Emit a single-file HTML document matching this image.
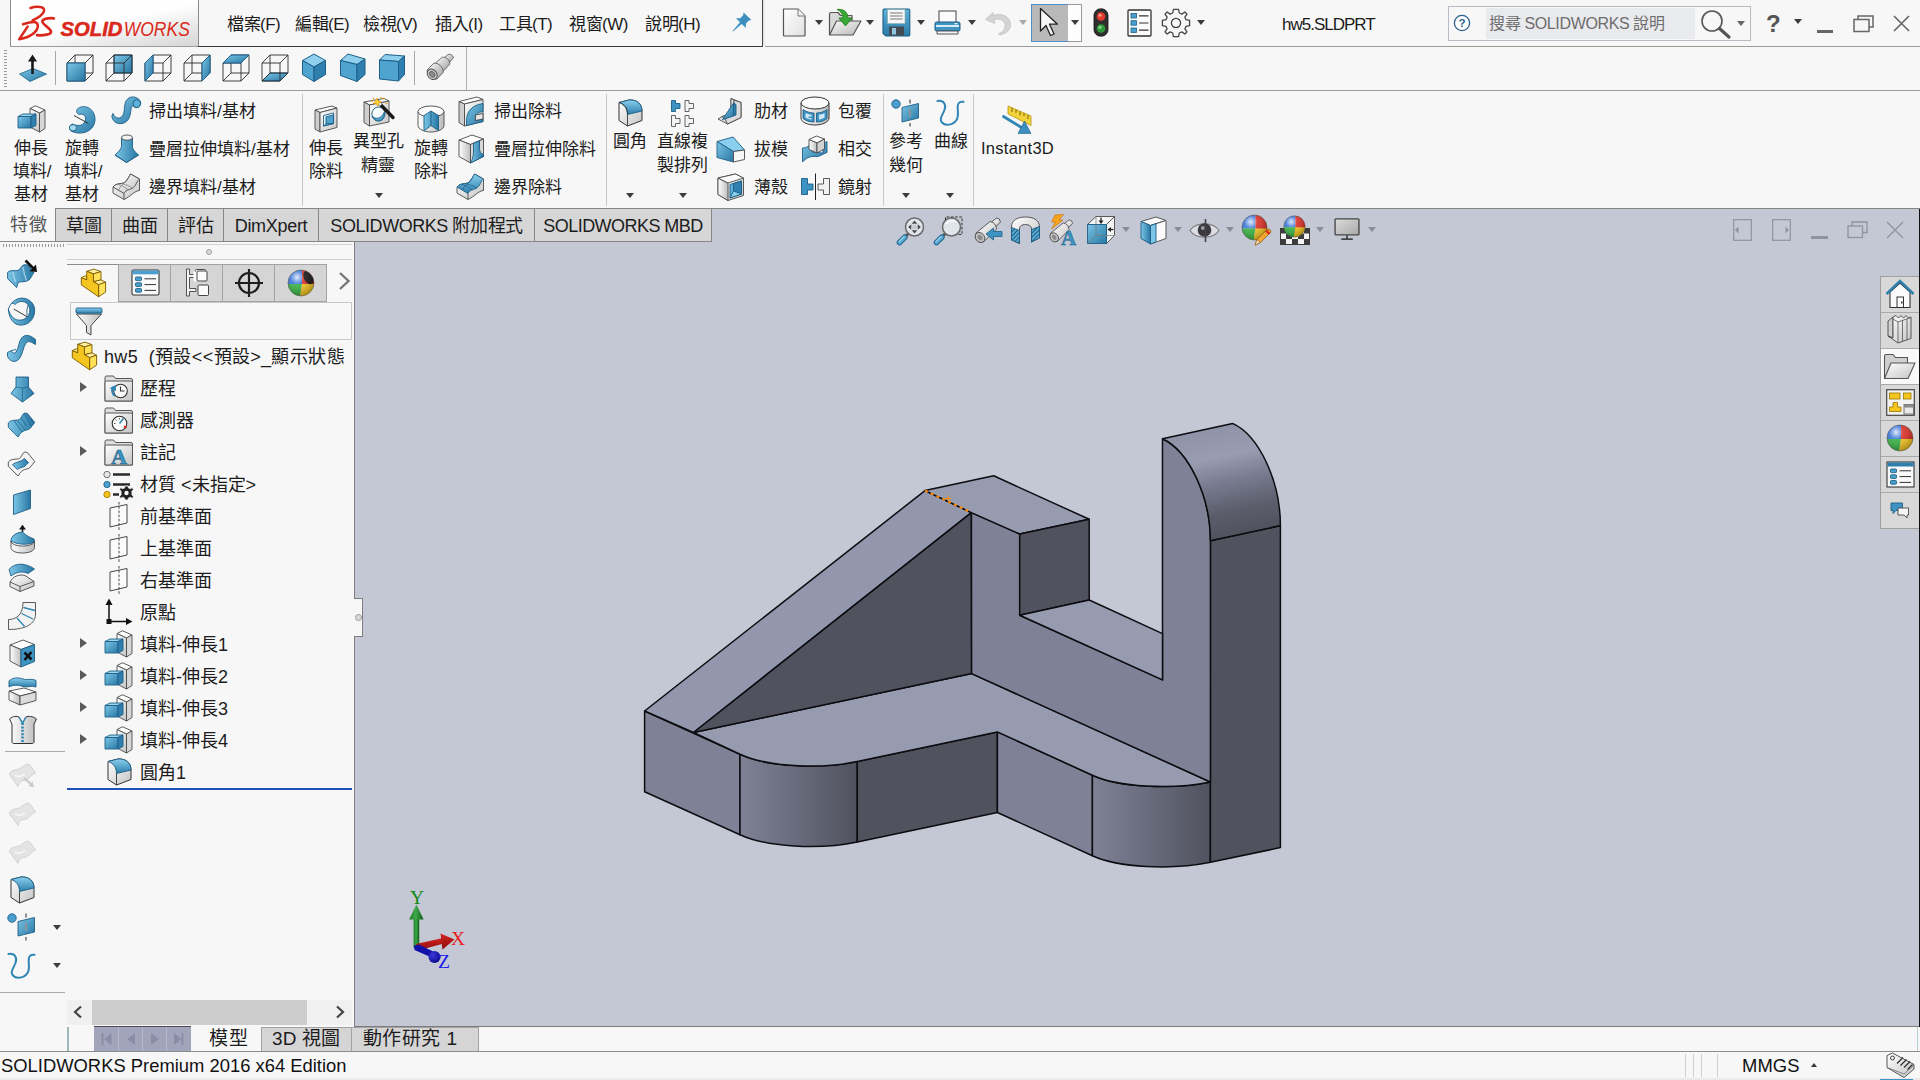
<!DOCTYPE html>
<html lang="zh-TW"><head><meta charset="utf-8"><title>SOLIDWORKS Premium 2016 x64 Edition - [hw5.SLDPRT]</title>
<style>
*{box-sizing:border-box;margin:0;padding:0}
html,body{width:1920px;height:1080px;overflow:hidden;background:#f7f7f7;font-family:"Liberation Sans",sans-serif;color:#1a1a1a}
.a{position:absolute}
.t{position:absolute;white-space:nowrap;font-size:17px;line-height:20px;color:#1c1c1c}
.c{text-align:center}
svg{position:absolute;overflow:visible}
.dd{position:absolute;width:0;height:0;border-left:4px solid transparent;border-right:4px solid transparent;border-top:5px solid #3c3c3c}
.ddg{border-top-color:#8a8d96}
.vsep{position:absolute;width:1px;background:#c9c9c9}
.tab{position:absolute;top:208px;height:34px;background:#d6d6d6;border:1px solid #858585;font-size:18px;line-height:34px;text-align:center;white-space:nowrap;color:#1c1c1c}
.row{position:absolute;left:140px;font-size:18px;line-height:20px;white-space:nowrap;color:#1c1c1c}
.exp{position:absolute;left:80px;width:0;height:0;border-top:5.5px solid transparent;border-bottom:5.5px solid transparent;border-left:7px solid #5a5a5a}
</style></head>
<body>

<!-- ===== Graphics viewport ===== -->
<div class="a" style="left:355px;top:209px;width:1565px;height:818px;background:#c4c8d4"></div>
<div class="a" style="left:354px;top:242px;width:1px;height:785px;background:#7d7d7d"></div>
<div class="a" style="left:355px;top:1026px;width:1565px;height:1px;background:#7c7c7c"></div>
<div class="a" style="left:1919px;top:209px;width:1px;height:818px;background:#101014"></div>
<!-- splitter handle -->
<div class="a" style="left:355px;top:598px;width:8px;height:39px;background:#f7f7f7;border:1px solid #7d7d7d;border-left:none"></div>
<div class="a" style="left:354px;top:599px;width:1px;height:37px;background:#f7f7f7"></div>
<div class="a" style="left:355px;top:614px;width:7px;height:7px;border:1px solid #9a9a9a;border-radius:50%;background:#d9d9d9"></div>

<!-- ===== 3D model ===== -->
<svg style="left:0;top:0" width="1920" height="1080" viewBox="0 0 1920 1080">
<defs><linearGradient id="mf1" gradientUnits="userSpaceOnUse" x1="740" y1="0" x2="857" y2="0"><stop offset="0" stop-color="#7f8296"/><stop offset="0.45" stop-color="#6a6d7e"/><stop offset="1" stop-color="#50525e"/></linearGradient><linearGradient id="mf2" gradientUnits="userSpaceOnUse" x1="1092" y1="0" x2="1210" y2="0"><stop offset="0" stop-color="#7f8296"/><stop offset="0.45" stop-color="#6a6d7e"/><stop offset="1" stop-color="#50525e"/></linearGradient><linearGradient id="mf3" gradientUnits="userSpaceOnUse" x1="1197.5" y1="431" x2="1220.9" y2="538.5"><stop offset="0" stop-color="#8f93a8"/><stop offset="0.27" stop-color="#999db2"/><stop offset="0.52" stop-color="#777a8e"/><stop offset="0.78" stop-color="#5b5d6b"/><stop offset="1" stop-color="#50525e"/></linearGradient></defs>
<g stroke="#0c0c10" stroke-width="1.5" stroke-linejoin="round" stroke-linecap="round">
<polygon points="644.6,711 740,754.3 740,834.8 644.6,791.7" fill="#7f8296"/>
<path d="M 740 754.3 C 766.5 766.5 819.0 769.7 857.3 761.6 L 857.3 842 C 819.0 850.1 766.5 847.0 740 834.8 Z" fill="url(#mf1)"/>
<polygon points="857.3,761.6 997.4,731.9 997.4,812.5 857.3,842" fill="#50525e"/>
<polygon points="997.4,731.9 1092.4,775.2 1092.4,855.7 997.4,812.5" fill="#7f8296"/>
<path d="M 1092.4 775.2 C 1118.2 787.0 1171.1 790.1 1210.4 782 L 1210.4 862.3 C 1171.1 870.4 1118.2 867.5 1092.4 855.7 Z" fill="url(#mf2)"/>
<polygon points="1210.4,540.8 1280.4,525.6 1280.4,847.6 1210.4,862.3" fill="#50525e"/>
<path d="M 693.5 732.5 L 971.6 673.6 L 1210.4 782 C 1171.1 790.1 1118.2 787.0 1092.4 775.2 L 997.4 731.9 L 857.3 761.6 C 819.0 769.7 766.5 766.5 740 754.3 Z" fill="#979bb0"/>
<polygon points="644.6,711 925,490.6 971.4,512.6 693.5,732.5" fill="#9397ad"/>
<polygon points="693.5,732.5 971.4,512.6 971.6,673.6" fill="#50525e"/>
<path d="M 971.4 512.6 L 1019.7 534 L 1019.7 615.2 L 1162.5 679.9 L 1162.5 438.7 C 1189.0 450.9 1210.4 496.6 1210.4 540.8 L 1210.4 782 L 971.6 673.6 Z" fill="#7f8296"/>
<polygon points="925,490.6 993.7,475.8 1089.2,519.3 1019.7,534 971.4,512.6" fill="#979bb0"/>
<polygon points="1019.7,534 1089.2,519.3 1089.2,600 1019.7,615.2" fill="#50525e"/>
<polygon points="1019.7,615.2 1089.2,600 1162.5,633.6 1162.5,679.9" fill="#979bb0"/>
<path d="M 1162.5 438.7 L 1232.6 423.4 C 1259.1 435.6 1280.4 481.4 1280.4 525.6 L 1210.4 540.8 C 1210.4 496.6 1189.0 450.9 1162.5 438.7 Z" fill="url(#mf3)"/>
</g>
<path d="M 925 490.6 L 971.4 512.6" stroke="#ff8a00" stroke-width="2.2" stroke-dasharray="3 3.4"/>
<path d="M 945.3 498.5 h6 M 948.3 495.5 v6" stroke="#ff8a00" stroke-width="1"/>
</svg>

<!-- ===== Title bar ===== -->
<div class="a" style="left:0;top:0;width:1920px;height:47px;background:#f7f7f7"></div>
<div class="a" style="left:10px;top:0;width:189px;height:47px;background:linear-gradient(168deg,#ffffff 0%,#fefefe 50%,#e9e9e9 75%,#d6d6d6 100%);border-left:1px solid #8c8c8c;border-right:1px solid #8c8c8c;border-bottom:1px solid #9c9c9c"></div>
<div class="a" style="left:198px;top:46px;width:565px;height:1px;background:#3a3a3a"></div>
<div class="a" style="left:762px;top:0;width:1px;height:47px;background:#4a4a4a"></div>
<div class="a" style="left:763px;top:0;width:2px;height:46px;background:linear-gradient(90deg,#d9d9d9,#f7f7f7)"></div>
<div class="a" style="left:765px;top:46px;width:1155px;height:1px;background:#9a9a9a"></div>
<!-- DS SOLIDWORKS logo -->
<svg style="left:0;top:0" width="200" height="46" viewBox="0 0 200 46">
  <g fill="none" stroke="#da291c" stroke-linecap="round" stroke-linejoin="round">
    <path d="M30.5 8 C36 6.2 45.5 6 44 11.2 C42.8 15 38 18 32.5 20.5" stroke-width="2.5"/>
    <path d="M23 24.2 C28 22.8 33 21.8 35.3 22.2 C39.2 24 38.6 29 34 33 C30 36.4 24.5 38.4 19.2 39.3 L27.6 26.6" stroke-width="2.5"/>
    <path d="M53.8 18.3 C49 18 44 18.8 42.4 20.8 C40.8 23.4 50 27.8 51 31.4 C51.6 34.6 43.5 35.6 37 35.2" stroke-width="2.7"/>
  </g>
  <text x="60.5" y="36.1" font-family="Liberation Sans, sans-serif" font-size="19.8" font-weight="bold" font-style="italic" fill="#da291c" stroke="#da291c" stroke-width="0.5" textLength="62" lengthAdjust="spacingAndGlyphs">SOLID</text>
  <text x="123.8" y="36.1" font-family="Liberation Sans, sans-serif" font-size="19.8" font-style="italic" fill="#da291c" textLength="66" lengthAdjust="spacingAndGlyphs">WORKS</text>
</svg>
<!-- Menus -->
<div class="t" style="left:227px;top:15px;letter-spacing:-0.5px">檔案(F)</div>
<div class="t" style="left:295px;top:15px;letter-spacing:-0.5px">編輯(E)</div>
<div class="t" style="left:363px;top:15px;letter-spacing:-0.5px">檢視(V)</div>
<div class="t" style="left:435px;top:15px;letter-spacing:-0.5px">插入(I)</div>
<div class="t" style="left:499px;top:15px;letter-spacing:-0.5px">工具(T)</div>
<div class="t" style="left:569px;top:15px;letter-spacing:-0.5px">視窗(W)</div>
<div class="t" style="left:645px;top:15px;letter-spacing:-0.5px">說明(H)</div>
<!-- pin -->
<svg style="left:731px;top:11px" width="22" height="22" viewBox="0 0 22 22">
  <path d="M12.5 1.5 L20.5 9 L17.8 9.6 L14.8 12.8 L15 17 L10.7 13 L2 20.5 L1.5 20 L9 11.3 L5 7.2 L9.4 7.2 L12.2 4.2 Z" fill="#3d8fc0"/>
</svg>
<!-- New -->
<svg style="left:782px;top:8px" width="25" height="29" viewBox="0 0 25 29">
  <defs><linearGradient id="gdoc" x1="0" y1="0" x2="1" y2="1"><stop offset="0" stop-color="#ffffff"/><stop offset="1" stop-color="#e1e1e1"/></linearGradient></defs>
  <path d="M1.5 1 H16 L23 8 V27 Q23 28 22 28 H2.5 Q1.5 28 1.5 27 Z" fill="url(#gdoc)" stroke="#555" stroke-width="1.2" stroke-linejoin="round"/>
  <path d="M16 1 V8 H23" fill="#f4f4f4" stroke="#777" stroke-width="1"/>
</svg>
<div class="dd" style="left:815px;top:20px"></div>
<!-- Open -->
<svg style="left:828px;top:7px" width="36" height="30" viewBox="0 0 36 30">
  <defs><linearGradient id="gfo" x1="0" y1="0" x2="1" y2="1"><stop offset="0" stop-color="#fafafa"/><stop offset="1" stop-color="#b9b9b9"/></linearGradient></defs>
  <path d="M1.5 28 V7 Q1.5 5.5 3 5.5 H10 L12.5 8.5 H24 V14" fill="#d9d9d9" stroke="#555" stroke-width="1.2" stroke-linejoin="round"/>
  <path d="M1.5 28 L8.5 14 H33 L25 28 Z" fill="url(#gfo)" stroke="#555" stroke-width="1.2" stroke-linejoin="round"/>
  <path d="M9 2.5 C15 1.5 20 5 20 11 L24.2 11 L17.5 19 L10.8 11 L14.8 11 C14.8 7 13 4.5 9 2.5 Z" fill="#39a935" stroke="#1f7a1f" stroke-width="0.8" stroke-linejoin="round"/>
</svg>
<div class="dd" style="left:866px;top:20px"></div>
<!-- Save -->
<svg style="left:882px;top:8px" width="29" height="29" viewBox="0 0 29 29">
  <defs><linearGradient id="gsv" x1="0" y1="0" x2="0" y2="1"><stop offset="0" stop-color="#5fb0d8"/><stop offset="1" stop-color="#2a7aa8"/></linearGradient></defs>
  <path d="M2 1 H26.5 Q27.8 1 27.8 2.3 V26.7 Q27.8 28 26.5 28 H4 L1 25.5 V2.3 Q1 1 2 1 Z" fill="url(#gsv)" stroke="#1d5f86" stroke-width="1.1"/>
  <rect x="5.5" y="1.6" width="17.5" height="14" fill="#f6f6f6" stroke="#8aa" stroke-width="0.6"/>
  <path d="M8 5 H20.5 M8 8 H20.5 M8 11 H20.5" stroke="#777" stroke-width="1.1"/>
  <rect x="7" y="18.5" width="15" height="9" fill="#444b52"/>
  <rect x="10" y="20" width="4" height="6.5" fill="#8fc3e0"/>
</svg>
<div class="dd" style="left:917px;top:20px"></div>
<!-- Print -->
<svg style="left:934px;top:10px" width="27" height="26" viewBox="0 0 27 26">
  <rect x="5" y="1" width="17" height="12" fill="#fbfbfb" stroke="#555" stroke-width="1.1"/>
  <rect x="1" y="12" width="25" height="9" rx="1.5" fill="#3f94c4" stroke="#1d5f86" stroke-width="1"/>
  <rect x="2" y="15" width="23" height="2" fill="#d7ecf7"/>
  <rect x="20.5" y="13" width="3" height="1.3" fill="#e8f4fa"/>
  <path d="M3 21 H24 V24 H3 Z" fill="#f4f4f4" stroke="#555" stroke-width="1"/>
</svg>
<div class="dd" style="left:968px;top:20px"></div>
<!-- Undo (disabled) -->
<svg style="left:984px;top:11px" width="28" height="25" viewBox="0 0 28 25">
  <path d="M9 1.5 L1.5 8.5 L11 12.5 L9.8 9 C16 6.5 21 9.5 21 14.5 C21 18.5 18.5 21.5 14.5 22.5 L15.5 24 C22 23 26.5 19 26.5 13.5 C26.5 6 18 1.5 9 4.5 Z" fill="#d4d4d4" stroke="#c0c0c0" stroke-width="0.8" stroke-linejoin="round"/>
</svg>
<div class="dd ddg" style="left:1019px;top:20px;border-top-color:#a9a9a9"></div>
<!-- Select -->
<div class="a" style="left:1031px;top:4px;width:38px;height:38px;background:#b9b9b9;border:1px solid #4d8ed0"></div>
<div class="a" style="left:1068px;top:4px;width:14px;height:38px;background:#fdfdfd;border:1px solid #9a9a9a;border-left:none"></div>
<svg style="left:1039px;top:7px" width="22" height="30" viewBox="0 0 22 30">
  <path d="M1.5 1.5 V24 L7 18.5 L11.5 28.5 L15 27 L10.5 17.2 H18.5 Z" fill="#f7f7f7" stroke="#222" stroke-width="1.3" stroke-linejoin="round"/>
</svg>
<div class="dd" style="left:1071px;top:20px"></div>
<!-- Traffic light -->
<svg style="left:1093px;top:8px" width="16" height="29" viewBox="0 0 16 29">
  <rect x="1" y="0.8" width="14" height="27.4" rx="6.5" fill="#2e2e2e" stroke="#111" stroke-width="0.8"/>
  <circle cx="8" cy="8.5" r="4.3" fill="#e33b2e"/><circle cx="7" cy="7.3" r="1.5" fill="#f79a90"/>
  <circle cx="8" cy="20.5" r="4.3" fill="#2f9b3a"/><circle cx="7" cy="19.3" r="1.5" fill="#8fd694"/>
</svg>
<!-- Options list -->
<svg style="left:1127px;top:9px" width="25" height="28" viewBox="0 0 25 28">
  <rect x="1" y="1" width="23" height="26" rx="1" fill="#fbfbfb" stroke="#333" stroke-width="1.3"/>
  <rect x="4" y="4.5" width="5.5" height="4.5" fill="#4a9fcf" stroke="#1d5f86" stroke-width="0.8"/>
  <rect x="4" y="11.7" width="5.5" height="4.5" fill="#4a9fcf" stroke="#1d5f86" stroke-width="0.8"/>
  <rect x="4" y="19" width="5.5" height="4.5" fill="#4a9fcf" stroke="#1d5f86" stroke-width="0.8"/>
  <path d="M12 6.8 H21.5 M12 14 H21.5 M12 21.2 H21.5" stroke="#333" stroke-width="1.2"/>
</svg>
<!-- Gear -->
<svg style="left:1161px;top:8px" width="30" height="30" viewBox="-15 -15 30 30">
  <path id="gearp" fill="#f7f7f7" stroke="#444" stroke-width="1.3" stroke-linejoin="round" d="M-2.6 -13.6 H2.6 L3.3 -10 L5.8 -8.9 L8.9 -11 L11 -8.9 L8.9 -5.8 L10 -3.3 L13.6 -2.6 V2.6 L10 3.3 L8.9 5.8 L11 8.9 L8.9 11 L5.8 8.9 L3.3 10 L2.6 13.6 H-2.6 L-3.3 10 L-5.8 8.9 L-8.9 11 L-11 8.9 L-8.9 5.8 L-10 3.3 L-13.6 2.6 V-2.6 L-10 -3.3 L-8.9 -5.8 L-11 -8.9 L-8.9 -11 L-5.8 -8.9 L-3.3 -10 Z"/>
  <circle r="4.6" fill="#f7f7f7" stroke="#444" stroke-width="1.3"/>
</svg>
<div class="dd" style="left:1197px;top:20px"></div>
<!-- Doc title -->
<div class="t" style="left:1282px;top:15px;font-size:17px;letter-spacing:-1.0px">hw5.SLDPRT</div>
<!-- Search box -->
<div class="a" style="left:1448px;top:6px;width:303px;height:35px;border:1px solid #b9bcc4;background:#f7f7f7"></div>
<div class="a" style="left:1486px;top:8px;width:209px;height:31px;background:#e9eaee"></div>
<svg style="left:1453px;top:14px" width="18" height="18" viewBox="0 0 18 18"><circle cx="9" cy="9" r="7.6" fill="#fff" stroke="#2b5f8e" stroke-width="1.3"/><text x="9" y="13.2" font-family="Liberation Sans, sans-serif" font-weight="bold" font-size="11.5" fill="#2b5f8e" text-anchor="middle">?</text></svg>
<div class="t" style="left:1489px;top:14px;color:#6d6d6d;font-size:16px;letter-spacing:-0.35px">搜尋 SOLIDWORKS 說明</div>
<svg style="left:1700px;top:9px" width="32" height="30" viewBox="0 0 32 30"><circle cx="12" cy="12" r="10" fill="none" stroke="#555" stroke-width="1.6"/><path d="M19.5 19.5 L29 28" stroke="#555" stroke-width="3.2" stroke-linecap="round"/></svg>
<div class="dd" style="left:1737px;top:21px;border-top-color:#666"></div>
<!-- Help / window controls -->
<div class="t" style="left:1766px;top:10px;font-size:24px;line-height:28px;font-weight:bold;color:#555">?</div>
<div class="dd" style="left:1794px;top:19px"></div>
<div class="a" style="left:1817px;top:30px;width:16px;height:3px;background:#666"></div>
<svg style="left:1853px;top:15px" width="21" height="18" viewBox="0 0 21 18"><path d="M5 4.5 V1 H20 V12 H16" fill="none" stroke="#666" stroke-width="1.5"/><rect x="1" y="4.5" width="15" height="12" fill="none" stroke="#666" stroke-width="1.5"/></svg>
<svg style="left:1893px;top:15px" width="17" height="17" viewBox="0 0 17 17"><path d="M1 1 L16 16 M16 1 L1 16" stroke="#666" stroke-width="1.6"/></svg>

<!-- ===== Toolbar 2 (view orientation) ===== -->
<svg width="0" height="0"><defs><linearGradient id="gb" x1="0" y1="0" x2="1" y2="1"><stop offset="0" stop-color="#7cc6e6"/><stop offset="1" stop-color="#2776a4"/></linearGradient><linearGradient id="gb2" x1="0" y1="0" x2="0" y2="1"><stop offset="0" stop-color="#8ad0ee"/><stop offset="1" stop-color="#3d93c2"/></linearGradient></defs></svg>
<div class="a" style="left:0;top:90px;width:1920px;height:1px;background:#9b9b9b"></div>
<div class="a" style="left:466px;top:47px;width:1px;height:43px;background:#b0b0b0"></div>
<div class="a" style="left:4px;top:50px;width:3px;height:37px;background:repeating-linear-gradient(180deg,#9a9a9a 0 1.5px,transparent 1.5px 3px)"></div>
<svg style="left:19px;top:54px" width="29" height="29" viewBox="0 0 29 29"><polygon points="0.5,20 14,14.5 27.5,20 11,27.5" fill="url(#gb)" stroke="#1d5f86" stroke-width="0.8"/><path d="M13.5 20 V6" stroke="#1a1a1a" stroke-width="2.6"/><polygon points="9,7.5 13.5,0.5 18,7.5" fill="#1a1a1a"/></svg>
<div class="vsep" style="left:55px;top:51px;height:34px;background:#a8a8a8"></div>
<svg style="left:66px;top:53px" width="29" height="30" viewBox="0 0 29 30"><g fill="none" stroke="#2a2a2a" stroke-width="0.9" stroke-linejoin="round"><rect x="1" y="10" width="18" height="18"/><rect x="9" y="2" width="18" height="18"/><path d="M1 10 L9 2 M19 10 L27 2 M1 28 L9 20 M19 28 L27 20"/></g><polygon points="1,10 19,10 19,28 1,28" fill="url(#gb)" stroke="#1d5f86" stroke-width="1"/></svg>
<svg style="left:105px;top:53px" width="29" height="30" viewBox="0 0 29 30"><polygon points="9,2 27,2 27,20 9,20" fill="url(#gb)" stroke="#1d5f86" stroke-width="1"/><g fill="none" stroke="#2a2a2a" stroke-width="0.9" stroke-linejoin="round"><rect x="1" y="10" width="18" height="18"/><rect x="9" y="2" width="18" height="18"/><path d="M1 10 L9 2 M19 10 L27 2 M1 28 L9 20 M19 28 L27 20"/></g></svg>
<svg style="left:144px;top:53px" width="29" height="30" viewBox="0 0 29 30"><g fill="none" stroke="#2a2a2a" stroke-width="0.9" stroke-linejoin="round"><rect x="1" y="10" width="18" height="18"/><rect x="9" y="2" width="18" height="18"/><path d="M1 10 L9 2 M19 10 L27 2 M1 28 L9 20 M19 28 L27 20"/></g><polygon points="1,10 9,2 9,20 1,28" fill="url(#gb)" stroke="#1d5f86" stroke-width="1"/></svg>
<svg style="left:183px;top:53px" width="29" height="30" viewBox="0 0 29 30"><g fill="none" stroke="#2a2a2a" stroke-width="0.9" stroke-linejoin="round"><rect x="1" y="10" width="18" height="18"/><rect x="9" y="2" width="18" height="18"/><path d="M1 10 L9 2 M19 10 L27 2 M1 28 L9 20 M19 28 L27 20"/></g><polygon points="19,10 27,2 27,20 19,28" fill="url(#gb)" stroke="#1d5f86" stroke-width="1"/></svg>
<svg style="left:222px;top:53px" width="29" height="30" viewBox="0 0 29 30"><g fill="none" stroke="#2a2a2a" stroke-width="0.9" stroke-linejoin="round"><rect x="1" y="10" width="18" height="18"/><rect x="9" y="2" width="18" height="18"/><path d="M1 10 L9 2 M19 10 L27 2 M1 28 L9 20 M19 28 L27 20"/></g><polygon points="1,10 9,2 27,2 19,10" fill="url(#gb)" stroke="#1d5f86" stroke-width="1"/></svg>
<svg style="left:261px;top:53px" width="29" height="30" viewBox="0 0 29 30"><polygon points="1,28 9,20 27,20 19,28" fill="url(#gb)" stroke="#1d5f86" stroke-width="1"/><g fill="none" stroke="#2a2a2a" stroke-width="0.9" stroke-linejoin="round"><rect x="1" y="10" width="18" height="18"/><rect x="9" y="2" width="18" height="18"/><path d="M1 10 L9 2 M19 10 L27 2 M1 28 L9 20 M19 28 L27 20"/></g></svg>
<svg style="left:301px;top:53px" width="26" height="30" viewBox="0 0 26 30"><polygon points="13,1 24.5,7.5 13,14 1.5,7.5" fill="#8fd0ee" stroke="#1d5f86" stroke-width="1"/><polygon points="1.5,7.5 13,14 13,28.5 1.5,21.5" fill="#4fa3cf" stroke="#1d5f86" stroke-width="1"/><polygon points="24.5,7.5 13,14 13,28.5 24.5,21.5" fill="#2f80ae" stroke="#1d5f86" stroke-width="1"/></svg>
<svg style="left:339px;top:53px" width="28" height="30" viewBox="0 0 28 30"><polygon points="9,1 26,6 18,11.5 1.5,7.5" fill="#8fd0ee" stroke="#1d5f86" stroke-width="1"/><polygon points="1.5,7.5 18,11.5 18,28.5 1.5,22.5" fill="#4fa3cf" stroke="#1d5f86" stroke-width="1"/><polygon points="26,6 18,11.5 18,28.5 26,21.5" fill="#2f80ae" stroke="#1d5f86" stroke-width="1"/></svg>
<svg style="left:378px;top:53px" width="28" height="30" viewBox="0 0 28 30"><polygon points="7,1.5 26.5,3 20.5,8.5 1.5,7" fill="#8fd0ee" stroke="#1d5f86" stroke-width="1"/><polygon points="1.5,7 20.5,8.5 20.5,28 1.5,26" fill="#4fa3cf" stroke="#1d5f86" stroke-width="1"/><polygon points="26.5,3 20.5,8.5 20.5,28 26.5,21.5" fill="#2f80ae" stroke="#1d5f86" stroke-width="1"/></svg>
<div class="vsep" style="left:414px;top:51px;height:34px;background:#a8a8a8"></div>
<svg style="left:424px;top:53px" width="31" height="30" viewBox="0 0 31 30"><defs><linearGradient id="gcy" x1="0" y1="0" x2="1" y2="1"><stop offset="0" stop-color="#ffffff"/><stop offset="1" stop-color="#9a9a9a"/></linearGradient></defs>
<path d="M20 5 L24 1.5 Q28 0.5 29.5 4.5 L26 9 Z" fill="url(#gcy)" stroke="#666" stroke-width="0.9"/>
<path d="M12 9.5 L18.5 4 Q25 4.5 26 11 L20 17.5 Z" fill="url(#gcy)" stroke="#666" stroke-width="0.9"/>
<path d="M3 17 L10 10 Q18 10.5 19.5 19 L13 26 Q4 27.5 3 17 Z" fill="url(#gcy)" stroke="#666" stroke-width="0.9"/>
<ellipse cx="8.2" cy="21.3" rx="4.6" ry="5.6" transform="rotate(-40 8.2 21.3)" fill="#c9c9c9" stroke="#555" stroke-width="1"/>
<ellipse cx="8.2" cy="21.3" rx="2.4" ry="3.2" transform="rotate(-40 8.2 21.3)" fill="#8c8c8c" stroke="#555" stroke-width="0.8"/></svg>

<!-- ===== Ribbon (CommandManager) ===== -->
<svg width="0" height="0"><defs><linearGradient id="gw" x1="0" y1="0" x2="1" y2="1"><stop offset="0" stop-color="#ffffff"/><stop offset="1" stop-color="#c4c4c4"/></linearGradient><linearGradient id="gwv" x1="0" y1="0" x2="1" y2="0"><stop offset="0" stop-color="#ffffff"/><stop offset="1" stop-color="#bdbdbd"/></linearGradient><linearGradient id="gbv" x1="0" y1="0" x2="1" y2="0"><stop offset="0" stop-color="#7cc6e6"/><stop offset="1" stop-color="#2776a4"/></linearGradient><linearGradient id="gbh" x1="0" y1="0" x2="0" y2="1"><stop offset="0" stop-color="#8ad0ee"/><stop offset="1" stop-color="#2c7dab"/></linearGradient></defs></svg>
<div class="vsep" style="left:302px;top:94px;height:112px"></div>
<div class="vsep" style="left:606px;top:94px;height:112px"></div>
<div class="vsep" style="left:883px;top:94px;height:112px"></div>
<div class="vsep" style="left:973px;top:94px;height:112px"></div>
<div class="a" style="left:56px;top:208px;width:1864px;height:1px;background:#858585"></div>
<svg style="left:17px;top:105px" width="29.0" height="28.0" viewBox="0 0 29 28">
<polygon points="13,3.5 18.5,0.8 28,5 22.5,8" fill="#fdfdfd" stroke="#4a4a4a" stroke-width="0.9" stroke-linejoin="round"/>
<polygon points="13,3.5 22.5,8 22.5,27 13,22" fill="url(#gw)" stroke="#4a4a4a" stroke-width="0.9" stroke-linejoin="round"/>
<polygon points="22.5,8 28,5 28,23.5 22.5,27" fill="#d6d6d6" stroke="#4a4a4a" stroke-width="0.9" stroke-linejoin="round"/>
<polygon points="1,11.5 6,9 19,9 14,11.5" fill="#9ad6f0" stroke="#1d5f86" stroke-width="0.9" stroke-linejoin="round"/>
<polygon points="1,11.5 14,11.5 14,23 1,23" transform="skewY(0)" fill="url(#gb)" stroke="#1d5f86" stroke-width="0.9" stroke-linejoin="round"/>
<polygon points="14,11.5 19,9 19,20.5 14,23" fill="#2f80ae" stroke="#1d5f86" stroke-width="0.9" stroke-linejoin="round"/>
</svg>
<div class="t" style="top:139px;left:-29px;width:120px;text-align:center;">伸長</div>
<div class="t" style="top:162px;left:-28px;width:120px;text-align:center;">填料/</div>
<div class="t" style="top:185px;left:-29px;width:120px;text-align:center;">基材</div>
<svg style="left:68px;top:105px" width="29" height="30" viewBox="0 0 29 30">
<path d="M10 3.5 C17 -1.5 27.5 4 27 15 C26.5 25.5 15 31 4 26.5 C0.5 25 1 20 4.5 19 C10 22 17 20.5 17.5 14.5 C18 10 14.5 8.5 11.5 9.5 C8 8.5 8 5 10 3.5 Z" fill="url(#gb)" stroke="#1d5f86" stroke-width="0.9" stroke-linejoin="round"/>
<ellipse cx="5" cy="22.8" rx="3.6" ry="3.2" fill="#a6dcf3" stroke="#1d5f86" stroke-width="0.9" stroke-linejoin="round"/>
<path d="M6 10.5 L20.5 18.5" stroke="#222" stroke-width="0.9"/>
</svg>
<div class="t" style="top:139px;left:22px;width:120px;text-align:center;">旋轉</div>
<div class="t" style="top:162px;left:23px;width:120px;text-align:center;">填料/</div>
<div class="t" style="top:185px;left:22px;width:120px;text-align:center;">基材</div>
<svg style="left:111px;top:96px" width="31" height="29" viewBox="0 0 31 29">
<path d="M2 17.5 C4 23 10 24 12.5 18 C14 14 12.5 7 16.5 3 C20 -0.5 27 0.5 29.5 5.5 C30.5 9 27.5 12.5 24 11.5 C22.5 9 20.5 10 20 13 C19.5 19 18.5 26 11 27.5 C5 28.5 0.5 24 1 19.5 Z" fill="url(#gb)" stroke="#1d5f86" stroke-width="0.9" stroke-linejoin="round"/>
<ellipse cx="25.8" cy="7.6" rx="3.7" ry="4" fill="#5fb0d8" stroke="#1d5f86" stroke-width="0.9" stroke-linejoin="round"/>
</svg>
<div class="t" style="top:102px;left:149px;">掃出填料/基材</div>
<svg style="left:114px;top:134px" width="26" height="30" viewBox="0 0 26 30">
<path d="M7.5 3.5 V12.5 C7 16 3.5 18.5 1 21 L12.5 28.5 L24.5 21 C22 18.5 18.5 16 18.5 12.5 V3.5 Z" fill="url(#gbv)" stroke="#1d5f86" stroke-width="0.9" stroke-linejoin="round"/>
<path d="M1 21 L12.5 28.5 L24.5 21" fill="none" stroke="#1d5f86" stroke-width="0.9" stroke-linejoin="round"/>
<ellipse cx="13" cy="3.6" rx="5.5" ry="2.6" fill="#f2f2f2" stroke="#4a4a4a" stroke-width="0.9" stroke-linejoin="round"/>
</svg>
<div class="t" style="top:140px;left:149px;">疊層拉伸填料/基材</div>
<svg style="left:112px;top:173px" width="29" height="28" viewBox="0 0 29 28">
<path d="M1 14 C5 9 11 12 14 8.5 C16 6 17.5 2.5 18.5 1 L27.5 6 V17.5 C22 18 19.5 23 12 26.5 L1 20 Z" fill="url(#gw)" stroke="#4a4a4a" stroke-width="0.9" stroke-linejoin="round"/>
<path d="M1 14 C5 9 11 12 14 8.5 C16 6 17.5 2.5 18.5 1 L27.5 6 C24.5 8 24.5 12 21.5 14.5 C18.5 17 14 16 12 20.5 Z" fill="url(#gw)" stroke="#4a4a4a" stroke-width="0.9" stroke-linejoin="round"/>
<path d="M6 11.5 C10 12 13 14.5 16.5 17 M10.5 11 C13 11.5 17 12.5 20.5 15 M16 5 C13 10 8 13 6.5 17" fill="none" stroke="#777" stroke-width="0.7"/>
<path d="M12 20.5 V26.5" stroke="#4a4a4a" stroke-width="0.9" stroke-linejoin="round"/>
</svg>
<div class="t" style="top:178px;left:149px;">邊界填料/基材</div>
<svg style="left:314px;top:105px" width="24" height="28" viewBox="0 0 24 28">
<polygon points="1,5 18,1 23,3 6,7.5" fill="#fdfdfd" stroke="#4a4a4a" stroke-width="0.9" stroke-linejoin="round"/>
<polygon points="1,5 6,7.5 6,27 1,24" fill="#cfcfcf" stroke="#4a4a4a" stroke-width="0.9" stroke-linejoin="round"/>
<polygon points="6,7.5 23,3 23,22.5 6,27" fill="url(#gw)" stroke="#4a4a4a" stroke-width="0.9" stroke-linejoin="round"/>
<polygon points="9.5,10.5 19.5,8 19.5,18.5 9.5,21" fill="#e9f4fa" stroke="#1d5f86" stroke-width="0.9" stroke-linejoin="round"/>
<polygon points="12,11.8 19.5,10 19.5,18.5 12,19" fill="#4fa3cf" stroke="#1d5f86" stroke-width="0.9" stroke-linejoin="round"/>
<polygon points="9.5,21 12,19 19.5,18.5 19.5,18.5" fill="#8ad0ee" stroke="#1d5f86" stroke-width="0.9" stroke-linejoin="round"/>
</svg>
<div class="t" style="top:139px;left:266px;width:120px;text-align:center;">伸長</div>
<div class="t" style="top:162px;left:266px;width:120px;text-align:center;">除料</div>
<svg style="left:363px;top:97px" width="32" height="30" viewBox="0 0 32 30">
<polygon points="1,5 21,1.5 26,4 6.5,8" fill="#fdfdfd" stroke="#4a4a4a" stroke-width="0.9" stroke-linejoin="round"/>
<polygon points="1,5 6.5,8 6.5,29 1,25.5" fill="#cfcfcf" stroke="#4a4a4a" stroke-width="0.9" stroke-linejoin="round"/>
<polygon points="6.5,8 26,4 26,25 6.5,29" fill="url(#gw)" stroke="#4a4a4a" stroke-width="0.9" stroke-linejoin="round"/>
<ellipse cx="15.5" cy="17" rx="6.6" ry="7" fill="#f4fafd" stroke="#1d5f86" stroke-width="0.9" stroke-linejoin="round"/>
<path d="M9.3 19 C12 23 19 22 21.5 14.5 C22 20 19 24 15.5 24 C12 24 9.8 21.5 9.3 19 Z" fill="#4fa3cf" stroke="#1d5f86" stroke-width="0.9" stroke-linejoin="round"/>
<path d="M15 5 L30 20.5" stroke="#1a1a1a" stroke-width="3.4" stroke-linecap="round"/>
<path d="M15.5 5.5 L18 8" stroke="#e8e8e8" stroke-width="3"/>
<polygon points="14,1 15.3,4 18.5,4.8 15.6,6.2 15,9.5 13.2,6.6 10,6.5 12.4,4.3" fill="#ffd83a" stroke="#e08a00" stroke-width="0.6"/>
<path d="M8.5 3.5 l1.2 1.2 M20 2 l1.2 -1.2 M22.5 6.5 h1.8 M10 0.8 l0.8 1.2 M18 0 v1.6" stroke="#f08c00" stroke-width="1.1"/>
</svg>
<div class="t" style="top:132px;left:318.5px;width:120px;text-align:center;">異型孔</div>
<div class="t" style="top:156px;left:318px;width:120px;text-align:center;">精靈</div>
<div class="dd" style="left:374.5px;top:193px"></div>
<svg style="left:417px;top:105px" width="28" height="28" viewBox="0 0 28 28">
<path d="M1 6.5 V20.5 C1 24 7 27 14 27 C21 27 27 24 27 20.5 V6.5 Z" fill="url(#gwv)" stroke="#4a4a4a" stroke-width="0.9" stroke-linejoin="round"/>
<ellipse cx="14" cy="6.5" rx="13" ry="5.5" fill="#fbfbfb" stroke="#4a4a4a" stroke-width="0.9" stroke-linejoin="round"/>
<path d="M7 10.5 L14 6 L21.5 10.5 V25.5 L14 20.5 L7 26 Z" fill="url(#gbv)" stroke="#1d5f86" stroke-width="0.9" stroke-linejoin="round"/>
<path d="M14 6 V20.5" stroke="#1d5f86" stroke-width="0.9" stroke-linejoin="round"/>
</svg>
<div class="t" style="top:139px;left:371px;width:120px;text-align:center;">旋轉</div>
<div class="t" style="top:162px;left:371px;width:120px;text-align:center;">除料</div>
<svg style="left:458px;top:96px" width="27" height="31" viewBox="0 0 27 31">
<polygon points="1,5.5 19,1 25,3.5 6.5,8" fill="#fdfdfd" stroke="#4a4a4a" stroke-width="0.9" stroke-linejoin="round"/>
<polygon points="1,5.5 6.5,8 6.5,30 1,26.5" fill="#cfcfcf" stroke="#4a4a4a" stroke-width="0.9" stroke-linejoin="round"/>
<path d="M6.5 8 L25 3.5 V25.5 L6.5 30 Z" fill="url(#gw)" stroke="#4a4a4a" stroke-width="0.9" stroke-linejoin="round"/>
<path d="M8.5 27.5 C8 17 12 9.5 25 7.5 V15.5 C20 16 17.5 18.5 17.5 24.5 L25 23 V25.5 L8.5 29.5 Z" fill="url(#gb)" stroke="#1d5f86" stroke-width="0.9" stroke-linejoin="round"/>
<path d="M17.5 24.5 V19 L25 17.5 V23 Z" fill="#e6e6e6" stroke="#4a4a4a" stroke-width="0.9" stroke-linejoin="round"/>
</svg>
<div class="t" style="top:102px;left:494px;">掃出除料</div>
<svg style="left:458px;top:134px" width="27" height="30" viewBox="0 0 27 30">
<polygon points="1,6 14,1 25.5,5 12.5,10.5" fill="#fdfdfd" stroke="#4a4a4a" stroke-width="0.9" stroke-linejoin="round"/>
<polygon points="1,6 12.5,10.5 12.5,29 1,22.5" fill="url(#gwv)" stroke="#4a4a4a" stroke-width="0.9" stroke-linejoin="round"/>
<polygon points="12.5,10.5 25.5,5 25.5,22.5 12.5,29" fill="#dadada" stroke="#4a4a4a" stroke-width="0.9" stroke-linejoin="round"/>
<path d="M15.5 9.3 L21.5 6.8 V14 C21.5 18 23 19.5 25.5 20.5 V22.5 L12.5 29 C14 26 15.5 23 15.5 17 Z" fill="url(#gbv)" stroke="#1d5f86" stroke-width="0.9" stroke-linejoin="round"/>
</svg>
<div class="t" style="top:140px;left:494px;">疊層拉伸除料</div>
<svg style="left:456px;top:173px" width="29" height="28" viewBox="0 0 29 28">
<path d="M1 14 C5 9 11 12 14 8.5 C16 6 17.5 2.5 18.5 1 L27.5 6 V17.5 C22 18 19.5 23 12 26.5 L1 20 Z" fill="url(#gw)" stroke="#4a4a4a" stroke-width="0.9" stroke-linejoin="round"/>
<path d="M1 14 C5 9 11 12 14 8.5 C16 6 17.5 2.5 18.5 1 L27.5 6 C24.5 8 24.5 12 21.5 14.5 C18.5 17 14 16 12 20.5 Z" fill="url(#gbh)" stroke="#1d5f86" stroke-width="0.9" stroke-linejoin="round"/>
<path d="M6 11.5 C10 12 13 14.5 16.5 17 M10.5 11 C13 11.5 17 12.5 20.5 15 M16 5 C13 10 8 13 6.5 17" fill="none" stroke="#1d5f86" stroke-width="0.7"/>
<path d="M12 20.5 V26.5" stroke="#4a4a4a" stroke-width="0.9" stroke-linejoin="round"/>
</svg>
<div class="t" style="top:178px;left:494px;">邊界除料</div>
<svg style="left:618px;top:99px" width="25" height="28" viewBox="0 0 25 28">
<path d="M1 3.5 L11 1 C19 0.5 24 5 24 12 V21.5 L9.5 27 L1 21.5 Z" fill="url(#gw)" stroke="#333" stroke-width="1" stroke-linejoin="round"/>
<path d="M1 3.5 L11 1 C19 0.5 24 5 24 12 L9.5 15.5 C9.5 9 6 5 1 3.5 Z" fill="url(#gbh)" stroke="#1d5f86" stroke-width="0.9" stroke-linejoin="round"/>
<path d="M9.5 15.5 V27" stroke="#333" stroke-width="0.9"/>
<path d="M1 3.5 C6 5 9.5 9 9.5 15.5" fill="none" stroke="#333" stroke-width="0.9"/>
</svg>
<div class="t" style="top:132px;left:570px;width:120px;text-align:center;">圓角</div>
<div class="dd" style="left:625.5px;top:193px"></div>
<svg style="left:670px;top:99px" width="25" height="29" viewBox="0 0 25 29">
<path d="M1.5 1.5 h4 v3 h4.5 v5 h-4.5 v3 h-4 Z" fill="#3d93c2" stroke="#1d5f86" stroke-width="0.9"/><path d="M15 1.5 h4 v3 h4.5 v5 h-4.5 v3 h-4 Z" fill="#f4f4f4" stroke="#555" stroke-width="0.9"/><path d="M1.5 16.5 h4 v3 h4.5 v5 h-4.5 v3 h-4 Z" fill="#f4f4f4" stroke="#555" stroke-width="0.9"/><path d="M15 16.5 h4 v3 h4.5 v5 h-4.5 v3 h-4 Z" fill="#f4f4f4" stroke="#555" stroke-width="0.9"/>
</svg>
<div class="t" style="top:132px;left:622.5px;width:120px;text-align:center;">直線複</div>
<div class="t" style="top:156px;left:622.5px;width:120px;text-align:center;">製排列</div>
<div class="dd" style="left:678.5px;top:193px"></div>
<svg style="left:717px;top:97px" width="26" height="28" viewBox="0 0 26 28">
<path d="M14 1.5 L24 5.5 V20.5 L10.5 27 L1 22 L5 19.5 L14 17 Z" fill="url(#gw)" stroke="#4a4a4a" stroke-width="0.9" stroke-linejoin="round"/>
<path d="M14 1.5 L17 3 V17.5 L8 22 L5 19.5 L14 17 Z" fill="#ececec" stroke="#4a4a4a" stroke-width="0.9" stroke-linejoin="round"/>
<path d="M17 3 L24 5.5 V20.5 L10.5 27 L8 22 L17 17.5 Z" fill="#dcdcdc" stroke="#4a4a4a" stroke-width="0.9" stroke-linejoin="round"/>
<path d="M16.5 6 L16.5 19 L5.5 22.5 Z" fill="url(#gb)" stroke="#1d5f86" stroke-width="0.9" stroke-linejoin="round"/>
<path d="M16.5 6 L19 7.5 V18 L16.5 19 Z" fill="#2f80ae" stroke="#1d5f86" stroke-width="0.9" stroke-linejoin="round"/>
</svg>
<div class="t" style="top:102px;left:754px;">肋材</div>
<svg style="left:716px;top:136px" width="30" height="27" viewBox="0 0 30 27">
<polygon points="1,5.5 17,1 28.5,14 17.5,15.5" fill="#8ad0ee" stroke="#1d5f86" stroke-width="0.9" stroke-linejoin="round"/>
<polygon points="1,5.5 17.5,15.5 17.5,26 1,21.5" fill="url(#gb)" stroke="#1d5f86" stroke-width="0.9" stroke-linejoin="round"/>
<polygon points="17.5,15.5 28.5,14 28.5,23.5 17.5,26" fill="#f6f6f6" stroke="#4a4a4a" stroke-width="0.9" stroke-linejoin="round"/>
</svg>
<div class="t" style="top:140px;left:754px;">拔模</div>
<svg style="left:717px;top:173px" width="28" height="28" viewBox="0 0 28 28">
<polygon points="1,5 18.5,1 26.5,5 26.5,22.5 11,27.5 1,21.5" fill="url(#gw)" stroke="#4a4a4a" stroke-width="0.9" stroke-linejoin="round"/>
<polygon points="1,5 11,10 11,27.5 1,21.5" fill="url(#gwv)" stroke="#4a4a4a" stroke-width="0.9" stroke-linejoin="round"/>
<polygon points="1,5 18.5,1 26.5,5 11,10" fill="#fafafa" stroke="#4a4a4a" stroke-width="0.9" stroke-linejoin="round"/>
<polygon points="13,11.5 24.5,8 24.5,21 13,25" fill="#5fb0d8" stroke="#1d5f86" stroke-width="0.9" stroke-linejoin="round"/>
<polygon points="16.5,10.5 24.5,8 24.5,21 16.5,18" fill="#2f80ae" stroke="#1d5f86" stroke-width="0.9" stroke-linejoin="round"/>
<polygon points="13,25 16.5,18 24.5,21" fill="#8ad0ee" stroke="#1d5f86" stroke-width="0.9" stroke-linejoin="round"/>
</svg>
<div class="t" style="top:178px;left:754px;">薄殼</div>
<svg style="left:800px;top:96px" width="30" height="30" viewBox="0 0 30 30">
<path d="M1 7 V22 C1 26 7.5 29 15 29 C22.5 29 29 26 29 22 V7 Z" fill="url(#gwv)" stroke="#333" stroke-width="1"/>
<ellipse cx="15" cy="7" rx="14" ry="6" fill="#fafafa" stroke="#333" stroke-width="1"/>
<path d="M3 13.5 C7 16.5 12 17 14 17 V26 C10 26 5.5 25 3 22.5 Z M16.5 17 C20 17 24.5 16 27 13.5 V22.5 C24.5 25 20 26 16.5 26 Z" fill="#3d93c2" stroke="#1d5f86" stroke-width="0.9" stroke-linejoin="round"/>
<path d="M5.5 17 C7.5 18 9.5 18.5 11.5 18.7 V20.5 H8.5 V22 H11.5 V23.5 C9.5 23.3 7 22.7 5.5 21.5 Z M19 18.7 C21 18.5 23 18 24.5 17 V21.5 C23 22.7 21 23.3 19 23.5 Z" fill="#cfe9f6"/>
</svg>
<div class="t" style="top:102px;left:838px;">包覆</div>
<svg style="left:801px;top:135px" width="27" height="28" viewBox="0 0 27 28">
<path d="M1.5 13 C6 13.5 8 10 11 9 L11 17 L22 18 L22 8 C24 7.5 25 7 26 6.5 V17.5 C21 19 19 22 15 21.5 C10 21 6 22 1.5 27 Z" fill="url(#gb)" stroke="#1d5f86" stroke-width="0.9" stroke-linejoin="round"/>
<polygon points="8,4.5 15.5,1 23.5,4 16,8" fill="#fdfdfd" stroke="#4a4a4a" stroke-width="0.9" stroke-linejoin="round"/>
<polygon points="8,4.5 16,8 16,18 8,14.5" fill="url(#gwv)" stroke="#4a4a4a" stroke-width="0.9" stroke-linejoin="round"/>
<polygon points="16,8 23.5,4 23.5,14 16,18" fill="#d2d2d2" stroke="#4a4a4a" stroke-width="0.9" stroke-linejoin="round"/>
</svg>
<div class="t" style="top:140px;left:838px;">相交</div>
<svg style="left:800px;top:173px" width="31" height="28" viewBox="0 0 31 28">
<path d="M1.5 5.5 H7.5 V11 H13 V17 H7.5 V21.5 H1.5 Z" fill="#3d93c2" stroke="#1d5f86" stroke-width="0.9" stroke-linejoin="round"/>
<path d="M29.5 5.5 H23.5 V11 H18 V17 H23.5 V21.5 H29.5 Z" fill="#f1f1f1" stroke="#4a4a4a" stroke-width="0.9" stroke-linejoin="round"/>
<path d="M15.5 0.5 V27" stroke="#222" stroke-width="1"/>
</svg>
<div class="t" style="top:178px;left:838px;">鏡射</div>
<svg style="left:891px;top:99px" width="29" height="28" viewBox="0 0 29 28">
<circle cx="5" cy="5" r="4.2" fill="#4a9fcf" stroke="#1d5f86" stroke-width="0.9" stroke-linejoin="round"/>
<path d="M19 0.5 V4.5 M19 24 V27.5" stroke="#222" stroke-width="1" />
<polygon points="11,8.5 27.5,4.5 27.5,19 11,23" fill="url(#gb)" stroke="#1d5f86" stroke-width="0.9" stroke-linejoin="round"/>
<path d="M19 10 V17.5" stroke="#f4f4f4" stroke-width="1.6"/><path d="M19 10 V17.5" stroke="#222" stroke-width="0.8"/>
</svg>
<div class="t" style="top:132px;left:846px;width:120px;text-align:center;">參考</div>
<div class="t" style="top:156px;left:846px;width:120px;text-align:center;">幾何</div>
<div class="dd" style="left:901.5px;top:193px"></div>
<svg style="left:936px;top:99px" width="29" height="28" viewBox="0 0 29 28">
<path d="M1.5 2 C8 1 10.5 6 8.5 11 C6 17 3 20 6 23.5 C9 27 17 26.5 20.5 21 C24 15.5 20 8 22.5 4.5 C23.5 3 25.5 2.5 27.5 2.8" fill="none" stroke="#2f86b4" stroke-width="2" stroke-linecap="round"/>
</svg>
<div class="t" style="top:132px;left:890.5px;width:120px;text-align:center;">曲線</div>
<div class="dd" style="left:945.5px;top:193px"></div>
<svg style="left:1002px;top:105px" width="31" height="30" viewBox="0 0 31 30">
<polygon points="6,1 29,11 29,20.5 6,9" fill="#f3d33b" stroke="#b8940f" stroke-width="0.8"/>
<path d="M10 3 v4 M14 4.8 v3 M18 6.5 v4 M22 8.2 v3 M26 10 v4" stroke="#6b5500" stroke-width="0.9"/>
<path d="M1.5 11.5 L21 23.5" stroke="#2f86b4" stroke-width="2.8" stroke-linecap="round"/>
<polygon points="22.5,16 29,28.5 16,28.5" fill="#3d8fc0" stroke="#1d5f86" stroke-width="0.6"/>
</svg>
<div class="t" style="left:981px;top:138px;font-size:16.5px;letter-spacing:0.27px">Instant3D</div>

<!-- ===== CommandManager tabs ===== -->
<div class="t" style="left:10px;top:215px;font-size:18px;color:#555;letter-spacing:0.6px">特徵</div>
<div class="tab" style="left:55px;width:57px">草圖</div>
<div class="tab" style="left:111px;width:57px">曲面</div>
<div class="tab" style="left:167px;width:57px">評估</div>
<div class="tab" style="left:223px;width:96px;letter-spacing:-0.3px">DimXpert</div>
<div class="tab" style="left:318px;width:217px;letter-spacing:-0.45px">SOLIDWORKS 附加程式</div>
<div class="tab" style="left:534px;width:178px;letter-spacing:-0.55px">SOLIDWORKS MBD</div>

<!-- ===== Left vertical toolbar (surfaces) ===== -->
<div class="a" style="left:0;top:241px;width:56px;height:1px;background:#8a8a8a"></div>
<div class="a" style="left:3px;top:244px;width:62px;height:3px;background:repeating-linear-gradient(90deg,#9a9a9a 0 1.5px,transparent 1.5px 3px)"></div>
<svg style="left:6px;top:259px" width="33" height="30" viewBox="0 0 33 30"><path d="M1.6 13.4 C5 10.3 9 12.3 12 11.3 C15 10.3 15.5 6 18.3 5.7 C20 5.5 22 6 23.2 7.1 L28 14 C26 15 25.5 20 21.8 21.7 C18 23.4 14 22 12 23.8 L10.7 28.6 L1.6 19.6 Z" fill="url(#gbv)" stroke="#1d5f86" stroke-width="0.9" stroke-linejoin="round"/>
<path d="M7 13 C7.5 16 8 19 9.5 23 M17 8 C17.5 12 18.5 17 20.5 21.5" fill="none" stroke="#bfe3f4" stroke-width="1.4" opacity="0.7"/>
<path d="M19.5 1.5 L27.5 9.5" stroke="#111" stroke-width="2.6"/><polygon points="23.6,12.2 31,13 30,5.6" fill="#111"/></svg>
<svg style="left:7px;top:297px" width="29" height="29" viewBox="0 0 29 29"><path d="M4.8 5.9 C8 2.5 12 1 15.2 1.1 C23 1.5 27.7 7 27.7 13.6 C27.7 22 21.5 28.1 13.8 28.1 C7 28.1 2 22 1.3 12 C3 18 6 21.5 9.5 22.7 C14 24 19 22.5 21.7 18 C23.5 14.5 23 10.5 21.3 8 C19.5 5.2 16 4.2 13.6 4.5 C11.5 4.8 9.6 6 8.3 7.3 Z" fill="url(#gbv)" stroke="#1d5f86" stroke-width="0.9" stroke-linejoin="round"/>
<path d="M1.3 12 C2 10 3.5 7.5 4.8 5.9 M21.3 8 C20 10 19.6 14.5 20 18.5" fill="none" stroke="#1d5f86" stroke-width="0.9" stroke-linejoin="round"/>
<path d="M6.8 12 L20.5 20" stroke="#222" stroke-width="0.9"/></svg>
<svg style="left:6px;top:334px" width="31" height="30" viewBox="0 0 31 30"><path d="M1.5 22 C3 27 9 30 13.5 24.5 C17 20 17 13 20 9 C22.5 6 26 8.5 29.5 10.5 L29.5 5.5 C26 2.5 21 -0.5 16.5 3 C12.5 6.5 13 14 10 18 C8.5 20 6 19 5.5 16.5 L1.5 18.5 Z" fill="url(#gbv)" stroke="#1d5f86" stroke-width="0.9" stroke-linejoin="round"/>
<path d="M5.5 16.5 L10 15.5" fill="none" stroke="#1d5f86" stroke-width="0.9" stroke-linejoin="round"/></svg>
<svg style="left:10px;top:376px" width="25" height="27" viewBox="0 0 25 27"><path d="M6 1 H18.5 V11 L24 17.5 L12.5 26 L1 17.5 L6 11 Z" fill="url(#gbv)" stroke="#1d5f86" stroke-width="0.9" stroke-linejoin="round"/>
<path d="M12.5 12 V26 M6 11 L12.5 12 L18.5 11" fill="none" stroke="#1d5f86" stroke-width="0.7"/></svg>
<svg style="left:7px;top:412px" width="29" height="26" viewBox="0 0 29 26"><path d="M1.3 11 C3 9 5 8.5 6.9 8.3 C10 8 12 8.5 13.8 6.2 C15 4.5 15.5 2 17.3 1.3 C18.5 0.9 19.8 1.2 20.8 2 L27.7 10.4 C26 12 25 15 22.9 16.6 C20.5 18.3 18 18 15.9 19.4 C14 20.6 13 22 12.4 22.9 L11 25 L1.3 15.2 Z" fill="url(#gbv)" stroke="#1d5f86" stroke-width="0.9" stroke-linejoin="round"/>
<path d="M6.9 8.3 L15 19.8 M10 8.2 L18.5 18.5 M17.3 1.3 L24.5 14.5 M20 1.5 L26.8 11.5 M13.8 6.2 C16 8 18 11 19 14" fill="none" stroke="#1d5f86" stroke-width="0.8"/></svg>
<svg style="left:7px;top:451px" width="29" height="26" viewBox="0 0 29 26"><path d="M1.3 11 C3 9 5 8.5 6.9 8.3 C10 8 12 8.5 13.8 6.2 C15 4.5 15.5 2 17.3 1.3 C18.5 0.9 19.8 1.2 20.8 2 L27.7 10.4 C26 12 25 15 22.9 16.6 C20.5 18.3 18 18 15.9 19.4 C14 20.6 13 22 12.4 22.9 L11 25 L1.3 15.2 Z" fill="#f4f4f4" stroke="#4a4a4a" stroke-width="0.9" stroke-linejoin="round"/>
<path d="M5.5 13.7 C7.5 12 9 11.8 11 11 C13.5 10 15.5 9.5 17.3 7.5 L21.5 11.6 C20 13 18.5 15 16.6 15.8 C14.5 16.6 12 17 10.4 18.6 Z" fill="url(#gbv)" stroke="#1d5f86" stroke-width="0.9" stroke-linejoin="round"/></svg>
<svg style="left:12px;top:489px" width="20" height="27" viewBox="0 0 20 27"><polygon points="1.5,6 18.5,1 18.5,19.5 1.5,25.5" fill="url(#gbv)" stroke="#1d5f86" stroke-width="0.9" stroke-linejoin="round"/></svg>
<svg style="left:10px;top:525px" width="26" height="29" viewBox="0 0 26 29"><path d="M12.5 0.5 V7" stroke="#111" stroke-width="1.6"/><polygon points="9,4.5 12.5,0 16,4.5" fill="#111"/>
<path d="M1 16 C1 11 6 7.5 12.5 7 C16 10.5 21 13 24 14 C24.5 15 24.5 16.5 24 17.5 C18 20 8 20 1 16 Z" fill="url(#gbv)" stroke="#1d5f86" stroke-width="0.9" stroke-linejoin="round"/>
<path d="M1 16 V22.5 C1 26 6 28 12.5 28 C19 28 24.5 26 24.5 22.5 V16 C24.5 19 19 21 12.5 21 C6 21 1 19 1 16 Z" fill="url(#gwv)" stroke="#4a4a4a" stroke-width="0.9" stroke-linejoin="round"/></svg>
<svg style="left:8px;top:563px" width="28" height="29" viewBox="0 0 28 29"><path d="M1 6.5 C7 -1 18 0 26.5 6 L20 10.5 C15 8 9 8.5 3 13 Z" fill="url(#gbv)" stroke="#1d5f86" stroke-width="0.9" stroke-linejoin="round"/>
<path d="M2 19 C5 13 12 11 17 12.5 L26 18.5 V23 L12 28.5 L2 23.5 Z" fill="url(#gw)" stroke="#4a4a4a" stroke-width="0.9" stroke-linejoin="round"/>
<path d="M2 19 L12 23.5 L26 18.5 M12 23.5 V28.5" fill="none" stroke="#4a4a4a" stroke-width="0.9" stroke-linejoin="round"/></svg>
<svg style="left:7px;top:601px" width="30" height="30" viewBox="0 0 30 30"><path d="M16 1.5 H28.5 V14 C28 22 20 28.5 1.5 28.5 V18.5 C10 18.5 16 13 16 1.5 Z" fill="#f3f3f3" stroke="#4a4a4a" stroke-width="0.9" stroke-linejoin="round"/>
<path d="M16.5 6.5 L28 9.5 M14.5 12.5 L26 18 M10 17 L17.5 25.5" fill="none" stroke="#2f86b4" stroke-width="1.3"/></svg>
<svg style="left:9px;top:639px" width="27" height="29" viewBox="0 0 27 29"><polygon points="1,6 14,1 25.5,5.5 12,10.5" fill="#fdfdfd" stroke="#4a4a4a" stroke-width="0.9" stroke-linejoin="round"/><polygon points="1,6 12,10.5 12,28 1,22" fill="url(#gwv)" stroke="#4a4a4a" stroke-width="0.9" stroke-linejoin="round"/>
<polygon points="12,10.5 25.5,5.5 25.5,22.5 12,28" fill="#3d93c2" stroke="#1d5f86" stroke-width="0.9" stroke-linejoin="round"/>
<path d="M15.5 13.5 L22.5 20.5 M22.5 13 L15.5 21" stroke="#111" stroke-width="2.6"/></svg>
<svg style="left:8px;top:676px" width="29" height="30" viewBox="0 0 29 30"><path d="M1 5 C5 1 11 1.5 15 3 C19 4.5 23 2 28 4.5 V11 C23 9 19 12 15 10.5 C11 9 5 8.5 1 11 Z" fill="url(#gbh)" stroke="#1d5f86" stroke-width="0.9" stroke-linejoin="round"/>
<polygon points="1,15 16,12 28,16 12,20" fill="#fcfcfc" stroke="#4a4a4a" stroke-width="0.9" stroke-linejoin="round"/><polygon points="1,15 12,20 12,29 1,24" fill="url(#gwv)" stroke="#4a4a4a" stroke-width="0.9" stroke-linejoin="round"/><polygon points="12,20 28,16 28,24.5 12,29" fill="#dcdcdc" stroke="#4a4a4a" stroke-width="0.9" stroke-linejoin="round"/></svg>
<svg style="left:8px;top:715px" width="30" height="30" viewBox="0 0 30 30"><path d="M1.5 4 C5 1 9 1 11 2 L14.5 8 L18 2 C20 1 25 1 28.5 4 L26 9 V27 C26 28 25 28.5 24 28.5 H6 C5 28.5 4 28 4 27 V9 Z" fill="url(#gwv)" stroke="#333" stroke-width="1" stroke-linejoin="round"/>
<path d="M14.5 8 V27" stroke="#2f86b4" stroke-width="2.6" stroke-dasharray="2 1.4"/><path d="M11 2 L14.5 8 L18 2" fill="none" stroke="#2f86b4" stroke-width="1.4"/></svg>
<div class="a" style="left:5px;top:751px;width:60px;height:1px;background:#a9a9a9"></div>
<svg style="left:8px;top:762px" width="29" height="27" viewBox="0 0 29 27"><path d="M1 12 C5 6 9 9 13 6 C16 3.5 19 1 22 3 L27.5 11 C24 12 22 16 19 17.5 C15 19.5 12 17 10 24.5 Z" fill="#e4e4e4" stroke="#cfcfcf" stroke-width="0.9"/>
<path d="M7 13 C10 15 13 15 17 12" fill="none" stroke="#f6f6f6" stroke-width="1.6"/><path d="M16 16 L24 23" stroke="#c9c9c9" stroke-width="2"/><polygon points="26,25.5 20.5,24 24.5,19.5" fill="#c9c9c9"/></svg>
<svg style="left:8px;top:801px" width="29" height="27" viewBox="0 0 29 27"><path d="M1 12 C5 6 9 9 13 6 C16 3.5 19 1 22 3 L27.5 11 C24 12 22 16 19 17.5 C15 19.5 12 17 10 24.5 Z" fill="#e4e4e4" stroke="#cfcfcf" stroke-width="0.9"/>
<path d="M7 13 C10 15 13 15 17 12" fill="none" stroke="#f6f6f6" stroke-width="1.6"/></svg>
<svg style="left:8px;top:839px" width="29" height="27" viewBox="0 0 29 27"><path d="M1 12 C5 6 9 9 13 6 C16 3.5 19 1 22 3 L27.5 11 C24 12 22 16 19 17.5 C15 19.5 12 17 10 24.5 Z" fill="#e4e4e4" stroke="#cfcfcf" stroke-width="0.9"/>
<path d="M7 13 C10 15 13 15 17 12" fill="none" stroke="#f6f6f6" stroke-width="1.6"/></svg>
<svg style="left:10px;top:876px" width="25" height="28" viewBox="0 0 25 28">
<path d="M1 3.5 L11 1 C19 0.5 24 5 24 12 V21.5 L9.5 27 L1 21.5 Z" fill="url(#gw)" stroke="#333" stroke-width="1" stroke-linejoin="round"/>
<path d="M1 3.5 L11 1 C19 0.5 24 5 24 12 L9.5 15.5 C9.5 9 6 5 1 3.5 Z" fill="url(#gbh)" stroke="#1d5f86" stroke-width="0.9" stroke-linejoin="round"/>
<path d="M9.5 15.5 V27" stroke="#333" stroke-width="0.9"/></svg>
<svg style="left:7px;top:913px" width="29" height="28" viewBox="0 0 29 28">
<circle cx="5" cy="5" r="4.2" fill="#4a9fcf" stroke="#1d5f86" stroke-width="0.9" stroke-linejoin="round"/><path d="M19 0.5 V4.5 M19 24 V27.5" stroke="#222" stroke-width="1" />
<polygon points="11,8.5 27.5,4.5 27.5,19 11,23" fill="url(#gb)" stroke="#1d5f86" stroke-width="0.9" stroke-linejoin="round"/><path d="M19 10 V17.5" stroke="#f4f4f4" stroke-width="1.6"/><path d="M19 10 V17.5" stroke="#222" stroke-width="0.8"/></svg>
<div class="dd" style="left:53px;top:925px"></div>
<svg style="left:7px;top:952px" width="29" height="28" viewBox="0 0 29 28">
<path d="M1.5 2 C8 1 10.5 6 8.5 11 C6 17 3 20 6 23.5 C9 27 17 26.5 20.5 21 C24 15.5 20 8 22.5 4.5 C23.5 3 25.5 2.5 27.5 2.8" fill="none" stroke="#2f86b4" stroke-width="2" stroke-linecap="round"/></svg>
<div class="dd" style="left:53px;top:963px"></div>
<div class="a" style="left:0;top:992px;width:65px;height:1px;background:#a9a9a9"></div>

<!-- ===== FeatureManager panel ===== -->
<div class="a" style="left:67px;top:244px;width:285px;height:1px;background:#d2d2d2"></div>
<div class="a" style="left:67px;top:259px;width:285px;height:1px;background:#cfcfcf"></div>
<div class="a" style="left:206px;top:249px;width:6px;height:6px;border:1px solid #a2a2a2;border-radius:50%;background:#d9d9d9"></div>
<div class="a" style="left:67px;top:264px;width:52px;height:1px;background:#8c8c8c"></div>
<div class="a" style="left:118px;top:264px;width:53px;height:38px;background:#d5d5d5;border:1px solid #a3a3a3"></div>
<div class="a" style="left:170px;top:264px;width:53px;height:38px;background:#d5d5d5;border:1px solid #a3a3a3"></div>
<div class="a" style="left:222px;top:264px;width:53px;height:38px;background:#d5d5d5;border:1px solid #a3a3a3"></div>
<div class="a" style="left:274px;top:264px;width:53px;height:38px;background:#d5d5d5;border:1px solid #a3a3a3"></div>
<svg style="left:80px;top:268px" width="27" height="30" viewBox="0 0 27 30">
<g stroke="#7a5a00" stroke-width="0.9" stroke-linejoin="round">
<polygon points="1.3,9.6 5.1,7.8 6.7,8.5 6.7,11.9" fill="#ffe978"/>
<polygon points="6.7,3.3 13.9,1.1 21,3.6 13.4,5.9" fill="#fff0a0"/>
<polygon points="13.4,5.9 21,3.6 21,11.9 13.4,13.7" fill="#ffe25a"/>
<polygon points="13.4,13.7 21,11.9 25.6,14.2 18.6,16.6" fill="#fff0a0"/>
<polygon points="18.6,16.6 25.6,14.2 25.6,24.1 18.6,28.8" fill="#ffe25a"/>
<polygon points="1.3,9.6 6.7,11.9 6.7,3.3 13.4,5.9 13.4,13.7 18.6,16.6 18.6,28.8 1.3,16.8" fill="#f5c61f"/>
</g></svg>
<svg style="left:131px;top:269px" width="29" height="27" viewBox="0 0 29 27">
<rect x="1" y="1" width="27" height="25" rx="1.5" fill="#fafafa" stroke="#333" stroke-width="1.1"/>
<rect x="1.5" y="1.5" width="26" height="3.8" fill="#4a9fcf"/>
<rect x="4.5" y="8" width="6" height="3.6" rx="0.8" fill="#4a9fcf" stroke="#1d5f86" stroke-width="0.9" stroke-linejoin="round"/><rect x="4.5" y="13.8" width="6" height="3.6" rx="0.8" fill="#4a9fcf" stroke="#1d5f86" stroke-width="0.9" stroke-linejoin="round"/><rect x="4.5" y="19.6" width="6" height="3.6" rx="0.8" fill="#4a9fcf" stroke="#1d5f86" stroke-width="0.9" stroke-linejoin="round"/>
<path d="M13.5 9.8 H25 M13.5 15.6 H25 M13.5 21.4 H25" stroke="#333" stroke-width="1"/></svg>
<svg style="left:185px;top:268px" width="25" height="29" viewBox="0 0 25 29">
<path d="M1.5 1 H4.5 V6.5 H10 V9.5 H4.5 V20.5 H11 V23.5 H4.5 V28 H1.5 Z" fill="#f2f2f2" stroke="#444" stroke-width="0.9"/>
<rect x="10.5" y="1.5" width="10" height="10" rx="1" fill="#fbfbfb" stroke="#444" stroke-width="1"/><rect x="8.5" y="3.5" width="10" height="10" rx="1" fill="#fbfbfb" stroke="#444" stroke-width="0" />
<rect x="12" y="3" width="10" height="10" rx="1" fill="#fbfbfb" stroke="#444" stroke-width="1"/>
<rect x="13" y="17" width="10.5" height="10.5" rx="1" fill="#fbfbfb" stroke="#444" stroke-width="1"/></svg>
<svg style="left:234px;top:268px" width="30" height="30" viewBox="0 0 30 30">
<circle cx="15" cy="15" r="10" fill="none" stroke="#1e1e1e" stroke-width="2.2"/><path d="M15 1 V29 M1 15 H29" stroke="#1e1e1e" stroke-width="2.2"/></svg>
<svg style="left:287px;top:269px" width="28" height="28" viewBox="0 0 28 28">
<defs><radialGradient id="bsh287" cx="0.35" cy="0.28" r="0.75"><stop offset="0" stop-color="#fff" stop-opacity="0.85"/><stop offset="0.35" stop-color="#fff" stop-opacity="0.15"/><stop offset="1" stop-color="#000" stop-opacity="0.28"/></radialGradient><clipPath id="bcl287"><circle cx="14" cy="14" r="13"/></clipPath></defs>
<g clip-path="url(#bcl287)"><rect x="0" y="0" width="15" height="15" fill="#2f6fd6"/><rect x="15" y="0" width="14" height="16" fill="#d8261c"/><path d="M0 15 H15 L13 28 H0 Z" fill="#2fae3a"/><path d="M15 15 L28 15 V28 H13 Z" fill="#f2c21a"/><ellipse cx="21.5" cy="8.5" rx="4.6" ry="7.2" transform="rotate(-28 21.5 8.5)" fill="#0a0a0a"/><circle cx="14" cy="14" r="13" fill="url(#bsh287)"/></g><circle cx="14" cy="14" r="13" fill="none" stroke="#555" stroke-width="0.6"/></svg>
<svg style="left:338px;top:271px" width="13" height="20" viewBox="0 0 13 20"><path d="M2 2 L10.5 10 L2 18" fill="none" stroke="#777" stroke-width="2.4"/></svg>
<div class="a" style="left:70px;top:302px;width:282px;height:38px;border:1px solid #c8c8c8;background:#f8f8f8"></div>
<svg style="left:75px;top:307px" width="28" height="29" viewBox="0 0 28 29">
<path d="M1.5 7 H26.5 L16 18.5 V28 L11.5 25.5 V18.5 Z" fill="url(#gwv)" stroke="#444" stroke-width="1" stroke-linejoin="round"/>
<rect x="1" y="1" width="26" height="5.2" rx="1.2" fill="url(#gbh)" stroke="#1d5f86" stroke-width="0.9" stroke-linejoin="round"/></svg>
<svg style="left:71px;top:341px" width="27" height="30" viewBox="0 0 27 30">
<g stroke="#7a5a00" stroke-width="0.9" stroke-linejoin="round">
<polygon points="1.3,9.6 5.1,7.8 6.7,8.5 6.7,11.9" fill="#ffe978"/>
<polygon points="6.7,3.3 13.9,1.1 21,3.6 13.4,5.9" fill="#fff0a0"/>
<polygon points="13.4,5.9 21,3.6 21,11.9 13.4,13.7" fill="#ffe25a"/>
<polygon points="13.4,13.7 21,11.9 25.6,14.2 18.6,16.6" fill="#fff0a0"/>
<polygon points="18.6,16.6 25.6,14.2 25.6,24.1 18.6,28.8" fill="#ffe25a"/>
<polygon points="1.3,9.6 6.7,11.9 6.7,3.3 13.4,5.9 13.4,13.7 18.6,16.6 18.6,28.8 1.3,16.8" fill="#f5c61f"/>
</g></svg>
<div class="row" style="left:104px;top:347px;letter-spacing:0.35px">hw5&nbsp;&nbsp;(預設&lt;&lt;預設&gt;_顯示狀態</div>
<div class="exp" style="top:382px"></div>
<svg style="left:104px;top:375px" width="30" height="27" viewBox="0 0 30 27">
<path d="M1 26 V2.5 Q1 1 2.5 1 H9.5 L11.5 3.5 H27 Q28.5 3.5 28.5 5 V26 Z" fill="#dedede" stroke="#555" stroke-width="1"/>
<path d="M1 26 V7.5 Q1 6 2.5 6 H27 Q28.5 6 28.5 7.5 V26 Z" fill="url(#gw)" stroke="#555" stroke-width="1"/><circle cx="16.5" cy="16" r="6.8" fill="#fcfcfc" stroke="#333" stroke-width="1.1"/><path d="M16.5 11.5 V16 H20.5" fill="none" stroke="#333" stroke-width="1.1"/><path d="M9.5 12 C7 14 8 19 11 21" fill="none" stroke="#2f86b4" stroke-width="2"/><polygon points="5.5,13 12,10 12,16" fill="#2f86b4"/></svg>
<div class="row" style="top:379px;letter-spacing:0px">歷程</div>
<svg style="left:104px;top:407px" width="30" height="27" viewBox="0 0 30 27">
<path d="M1 26 V2.5 Q1 1 2.5 1 H9.5 L11.5 3.5 H27 Q28.5 3.5 28.5 5 V26 Z" fill="#dedede" stroke="#555" stroke-width="1"/>
<path d="M1 26 V7.5 Q1 6 2.5 6 H27 Q28.5 6 28.5 7.5 V26 Z" fill="url(#gw)" stroke="#555" stroke-width="1"/><circle cx="15.5" cy="16.5" r="7.3" fill="#fcfcfc" stroke="#333" stroke-width="1.1"/><path d="M15.5 16.5 L19.5 11.5" stroke="#2f86b4" stroke-width="1.6"/><path d="M20 19.5 l2.5 1" stroke="#d8261c" stroke-width="2.4"/><path d="M10 16.5 h1.5 M15.5 11 v1.5 M11.5 12.5 l1 1" stroke="#333" stroke-width="0.8"/></svg>
<div class="row" style="top:411px;letter-spacing:0px">感測器</div>
<div class="exp" style="top:446px"></div>
<svg style="left:104px;top:439px" width="30" height="27" viewBox="0 0 30 27">
<path d="M1 26 V2.5 Q1 1 2.5 1 H9.5 L11.5 3.5 H27 Q28.5 3.5 28.5 5 V26 Z" fill="#dedede" stroke="#555" stroke-width="1"/>
<path d="M1 26 V7.5 Q1 6 2.5 6 H27 Q28.5 6 28.5 7.5 V26 Z" fill="url(#gw)" stroke="#555" stroke-width="1"/><text x="15" y="25" font-family="Liberation Serif, serif" font-weight="bold" font-size="22" text-anchor="middle" fill="#3d93c2" stroke="#1d5f86" stroke-width="0.6">A</text></svg>
<div class="row" style="top:443px;letter-spacing:0px">註記</div>
<svg style="left:103px;top:470px" width="32" height="30" viewBox="0 0 32 30">
<circle cx="4" cy="4.5" r="3.2" fill="#e6e6e6" stroke="#555" stroke-width="0.8"/><circle cx="4" cy="14.5" r="3.2" fill="#4a9fcf" stroke="#1d5f86" stroke-width="0.8"/><circle cx="4" cy="24.5" r="3.2" fill="#f2c21a" stroke="#a07800" stroke-width="0.8"/>
<path d="M10 4.5 H27 M10 14.5 H27 M10 24.5 H16" stroke="#2a2a2a" stroke-width="2.6"/>
<g transform="translate(23.5,23)"><path d="M-1.5 -7 H1.5 L2 -5 L4 -4.3 L5.8 -5.6 L7 -3.2 L5.3 -1.8 L5.5 0 L5.3 1.8 L7 3.2 L5.8 5.6 L4 4.3 L2 5 L1.5 7 H-1.5 L-2 5 L-4 4.3 L-5.8 5.6 L-7 3.2 L-5.3 1.8 L-5.5 0 L-5.3 -1.8 L-7 -3.2 L-5.8 -5.6 L-4 -4.3 L-2 -5 Z" fill="#222" stroke="#f7f7f7" stroke-width="0.8"/><circle r="2.2" fill="#f7f7f7"/></g></svg>
<div class="row" style="top:475px;letter-spacing:0px">材質 &lt;未指定&gt;</div>
<svg style="left:108px;top:501px" width="22" height="30" viewBox="0 0 22 30">
<polygon points="2,7 19,3.5 19,22 2,26" fill="#fbfbfb" stroke="#333" stroke-width="0.9"/><path d="M11 1 V29.5" stroke="#333" stroke-width="0.9" stroke-dasharray="2.6 1.6"/></svg>
<div class="row" style="top:507px;letter-spacing:0px">前基準面</div>
<svg style="left:108px;top:533px" width="22" height="30" viewBox="0 0 22 30">
<polygon points="2,7 19,3.5 19,22 2,26" fill="#fbfbfb" stroke="#333" stroke-width="0.9"/><path d="M11 1 V29.5" stroke="#333" stroke-width="0.9" stroke-dasharray="2.6 1.6"/></svg>
<div class="row" style="top:539px;letter-spacing:0px">上基準面</div>
<svg style="left:108px;top:565px" width="22" height="30" viewBox="0 0 22 30">
<polygon points="2,7 19,3.5 19,22 2,26" fill="#fbfbfb" stroke="#333" stroke-width="0.9"/><path d="M11 1 V29.5" stroke="#333" stroke-width="0.9" stroke-dasharray="2.6 1.6"/></svg>
<div class="row" style="top:571px;letter-spacing:0px">右基準面</div>
<svg style="left:104px;top:598px" width="30" height="29" viewBox="0 0 30 29">
<path d="M5 6 V23.5 H23" fill="none" stroke="#111" stroke-width="1.5"/><polygon points="1.5,7 5,0.5 8.5,7" fill="#111"/><polygon points="22,20 28.5,23.5 22,27" fill="#111"/><rect x="2.5" y="21" width="5" height="5" fill="#111"/></svg>
<div class="row" style="top:603px;letter-spacing:0px">原點</div>
<div class="exp" style="top:638px"></div>
<svg style="left:104px;top:630px" width="29" height="28" viewBox="0 0 29 28">
<polygon points="13,3.5 18.5,0.8 28,5 22.5,8" fill="#fdfdfd" stroke="#4a4a4a" stroke-width="0.9" stroke-linejoin="round"/><polygon points="13,3.5 22.5,8 22.5,27 13,22" fill="url(#gw)" stroke="#4a4a4a" stroke-width="0.9" stroke-linejoin="round"/><polygon points="22.5,8 28,5 28,23.5 22.5,27" fill="#d6d6d6" stroke="#4a4a4a" stroke-width="0.9" stroke-linejoin="round"/>
<polygon points="1,11.5 6,9 19,9 14,11.5" fill="#9ad6f0" stroke="#1d5f86" stroke-width="0.9" stroke-linejoin="round"/><polygon points="1,11.5 14,11.5 14,23 1,23" fill="url(#gb)" stroke="#1d5f86" stroke-width="0.9" stroke-linejoin="round"/><polygon points="14,11.5 19,9 19,20.5 14,23" fill="#2f80ae" stroke="#1d5f86" stroke-width="0.9" stroke-linejoin="round"/></svg>
<div class="row" style="top:635px;letter-spacing:0px">填料-伸長1</div>
<div class="exp" style="top:670px"></div>
<svg style="left:104px;top:662px" width="29" height="28" viewBox="0 0 29 28">
<polygon points="13,3.5 18.5,0.8 28,5 22.5,8" fill="#fdfdfd" stroke="#4a4a4a" stroke-width="0.9" stroke-linejoin="round"/><polygon points="13,3.5 22.5,8 22.5,27 13,22" fill="url(#gw)" stroke="#4a4a4a" stroke-width="0.9" stroke-linejoin="round"/><polygon points="22.5,8 28,5 28,23.5 22.5,27" fill="#d6d6d6" stroke="#4a4a4a" stroke-width="0.9" stroke-linejoin="round"/>
<polygon points="1,11.5 6,9 19,9 14,11.5" fill="#9ad6f0" stroke="#1d5f86" stroke-width="0.9" stroke-linejoin="round"/><polygon points="1,11.5 14,11.5 14,23 1,23" fill="url(#gb)" stroke="#1d5f86" stroke-width="0.9" stroke-linejoin="round"/><polygon points="14,11.5 19,9 19,20.5 14,23" fill="#2f80ae" stroke="#1d5f86" stroke-width="0.9" stroke-linejoin="round"/></svg>
<div class="row" style="top:667px;letter-spacing:0px">填料-伸長2</div>
<div class="exp" style="top:702px"></div>
<svg style="left:104px;top:694px" width="29" height="28" viewBox="0 0 29 28">
<polygon points="13,3.5 18.5,0.8 28,5 22.5,8" fill="#fdfdfd" stroke="#4a4a4a" stroke-width="0.9" stroke-linejoin="round"/><polygon points="13,3.5 22.5,8 22.5,27 13,22" fill="url(#gw)" stroke="#4a4a4a" stroke-width="0.9" stroke-linejoin="round"/><polygon points="22.5,8 28,5 28,23.5 22.5,27" fill="#d6d6d6" stroke="#4a4a4a" stroke-width="0.9" stroke-linejoin="round"/>
<polygon points="1,11.5 6,9 19,9 14,11.5" fill="#9ad6f0" stroke="#1d5f86" stroke-width="0.9" stroke-linejoin="round"/><polygon points="1,11.5 14,11.5 14,23 1,23" fill="url(#gb)" stroke="#1d5f86" stroke-width="0.9" stroke-linejoin="round"/><polygon points="14,11.5 19,9 19,20.5 14,23" fill="#2f80ae" stroke="#1d5f86" stroke-width="0.9" stroke-linejoin="round"/></svg>
<div class="row" style="top:699px;letter-spacing:0px">填料-伸長3</div>
<div class="exp" style="top:734px"></div>
<svg style="left:104px;top:726px" width="29" height="28" viewBox="0 0 29 28">
<polygon points="13,3.5 18.5,0.8 28,5 22.5,8" fill="#fdfdfd" stroke="#4a4a4a" stroke-width="0.9" stroke-linejoin="round"/><polygon points="13,3.5 22.5,8 22.5,27 13,22" fill="url(#gw)" stroke="#4a4a4a" stroke-width="0.9" stroke-linejoin="round"/><polygon points="22.5,8 28,5 28,23.5 22.5,27" fill="#d6d6d6" stroke="#4a4a4a" stroke-width="0.9" stroke-linejoin="round"/>
<polygon points="1,11.5 6,9 19,9 14,11.5" fill="#9ad6f0" stroke="#1d5f86" stroke-width="0.9" stroke-linejoin="round"/><polygon points="1,11.5 14,11.5 14,23 1,23" fill="url(#gb)" stroke="#1d5f86" stroke-width="0.9" stroke-linejoin="round"/><polygon points="14,11.5 19,9 19,20.5 14,23" fill="#2f80ae" stroke="#1d5f86" stroke-width="0.9" stroke-linejoin="round"/></svg>
<div class="row" style="top:731px;letter-spacing:0px">填料-伸長4</div>
<svg style="left:107px;top:758px" width="25" height="28" viewBox="0 0 25 28">
<path d="M1 3.5 L11 1 C19 0.5 24 5 24 12 V21.5 L9.5 27 L1 21.5 Z" fill="url(#gw)" stroke="#333" stroke-width="1" stroke-linejoin="round"/>
<path d="M1 3.5 L11 1 C19 0.5 24 5 24 12 L9.5 15.5 C9.5 9 6 5 1 3.5 Z" fill="url(#gbh)" stroke="#1d5f86" stroke-width="0.9" stroke-linejoin="round"/><path d="M9.5 15.5 V27" stroke="#333" stroke-width="0.9"/></svg>
<div class="row" style="top:763px;letter-spacing:0px">圓角1</div>
<div class="a" style="left:67px;top:788px;width:285px;height:2px;background:#1d53b8"></div>
<div class="a" style="left:67px;top:1000px;width:285px;height:25px;background:#f0f0f0"></div>
<div class="a" style="left:92px;top:1000px;width:215px;height:25px;background:#cdcdcd"></div>
<svg style="left:72px;top:1005px" width="12" height="14" viewBox="0 0 12 14"><path d="M9 1.5 L3 7 L9 12.5" fill="none" stroke="#444" stroke-width="2.2"/></svg>
<svg style="left:334px;top:1005px" width="12" height="14" viewBox="0 0 12 14"><path d="M3 1.5 L9 7 L3 12.5" fill="none" stroke="#444" stroke-width="2.2"/></svg>

<!-- ===== Heads-up view toolbar ===== -->
<svg style="left:896px;top:216px" width="30" height="30" viewBox="0 0 30 30"><path d="M12.5 17.5 L8.5 21.5" stroke="#555" stroke-width="3"/><path d="M8.8 21.2 L3.5 26.5" stroke="#1d5f86" stroke-width="5.6" stroke-linecap="round"/><path d="M8.8 21.2 L3.5 26.5" stroke="#5aa9d3" stroke-width="3.8" stroke-linecap="round"/><path d="M8 20.6 L3 25.6" stroke="#9ad6f0" stroke-width="1.2" stroke-linecap="round"/><circle cx="18.5" cy="11" r="9" fill="#e4e8ee" fill-opacity="0.9" stroke="#6a6a6a" stroke-width="1.5"/><path d="M18.5 4.6 l-2.8 3.2 h5.6 Z M18.5 17.4 l-2.8 -3.2 h5.6 Z M12.1 11 l3.2 -2.8 v5.6 Z M24.9 11 l-3.2 -2.8 v5.6 Z" fill="#4a4a4a"/><rect x="16" y="8.5" width="5" height="5" fill="#c9ced6"/></svg>
<svg style="left:933px;top:216px" width="30" height="30" viewBox="0 0 30 30"><path d="M12.5 17.5 L8.5 21.5" stroke="#555" stroke-width="3"/><path d="M8.8 21.2 L3.5 26.5" stroke="#1d5f86" stroke-width="5.6" stroke-linecap="round"/><path d="M8.8 21.2 L3.5 26.5" stroke="#5aa9d3" stroke-width="3.8" stroke-linecap="round"/><path d="M8 20.6 L3 25.6" stroke="#9ad6f0" stroke-width="1.2" stroke-linecap="round"/><circle cx="18.5" cy="11" r="9" fill="#e4e8ee" fill-opacity="0.9" stroke="#6a6a6a" stroke-width="1.5"/><path d="M13 8 C15 5 19 4 22.5 5.5" fill="none" stroke="#fff" stroke-width="1.8"/><path d="M12.5 4 V1 H29 V18.5 H25" fill="none" stroke="#333" stroke-width="1" stroke-dasharray="2.6 1.6"/></svg>
<svg style="left:972px;top:216px" width="31" height="29" viewBox="0 0 31 29"><path d="M19 6.5 L24.5 2 Q28 2 28.5 6 L23.5 11 Z" fill="url(#gw)" stroke="#4a4a4a" stroke-width="0.9" stroke-linejoin="round"/>
<path d="M4 17 L18 5.5 Q24 6.5 24.5 13 L11.5 26 Q3 27 4 17 Z" fill="url(#gw)" stroke="#4a4a4a" stroke-width="0.9" stroke-linejoin="round"/>
<ellipse cx="8" cy="21.5" rx="4.4" ry="5.4" transform="rotate(-40 8 21.5)" fill="#c2c2c2" stroke="#4a4a4a" stroke-width="0.9" stroke-linejoin="round"/><ellipse cx="8" cy="21.5" rx="2.2" ry="3" transform="rotate(-40 8 21.5)" fill="#8b8b8b"/><path d='M30 15.5 H21.5 V12 L14 18 L21.5 24 V20.5 H30 Z' fill='#3d93c2' stroke='#1d5f86' stroke-width='0.8'/></svg>
<svg style="left:1010px;top:216px" width="31" height="29" viewBox="0 0 31 29"><defs><pattern id="hat" width="3" height="3" patternUnits="userSpaceOnUse" patternTransform="rotate(45)"><rect width="3" height="3" fill="#5aa9d3"/><rect width="1" height="3" fill="#1d5f86"/></pattern></defs>
<path d="M1.5 11 C1.5 4.5 7 1 15.5 1 C24 1 29.5 4.5 29.5 11 V22 L21.5 26 V13 C21.5 10 19 8.5 15.5 8.5 C12 8.5 9.5 10 9.5 13 V27.5 L1.5 24 Z" fill="url(#gw)" stroke="#4a4a4a" stroke-width="0.9" stroke-linejoin="round"/>
<path d="M1.5 11.5 L9.5 14.5 V27.5 L1.5 24 Z" fill="url(#hat)" stroke="#1d5f86" stroke-width="0.9" stroke-linejoin="round"/><path d="M21.5 13.5 L29.5 10.5 V22 L21.5 26 Z" fill="url(#hat)" stroke="#1d5f86" stroke-width="0.9" stroke-linejoin="round"/></svg>
<svg style="left:1047px;top:214px" width="32" height="32" viewBox="0 0 32 32">
<g transform="translate(0,4) scale(0.9)"><path d="M19 6.5 L24.5 2 Q28 2 28.5 6 L23.5 11 Z" fill="url(#gw)" stroke="#4a4a4a" stroke-width="0.9" stroke-linejoin="round"/>
<path d="M4 17 L18 5.5 Q24 6.5 24.5 13 L11.5 26 Q3 27 4 17 Z" fill="url(#gw)" stroke="#4a4a4a" stroke-width="0.9" stroke-linejoin="round"/>
<ellipse cx="8" cy="21.5" rx="4.4" ry="5.4" transform="rotate(-40 8 21.5)" fill="#c2c2c2" stroke="#4a4a4a" stroke-width="0.9" stroke-linejoin="round"/><ellipse cx="8" cy="21.5" rx="2.2" ry="3" transform="rotate(-40 8 21.5)" fill="#8b8b8b"/></g>
<polygon points="8,1 16.5,0.5 12,6 16,6 4.5,15 8.5,8 4.5,8" fill="#f7a41d" stroke="#c96a00" stroke-width="0.6"/>
<text x="21.5" y="31" font-family="Liberation Serif, serif" font-weight="bold" font-size="21" text-anchor="middle" fill="#3d93c2" stroke="#1d5f86" stroke-width="0.5">A</text></svg>
<svg style="left:1086px;top:215px" width="30" height="30" viewBox="0 0 30 30">
<polygon points="1.5,9.5 10,1.5 28.5,1.5 20.5,9.5" fill="#f3f4f6" stroke="#4a4a4a" stroke-width="0.9" stroke-linejoin="round"/><polygon points="20.5,9.5 28.5,1.5 28.5,20.5 20.5,28.5" fill="#f3f4f6" stroke="#4a4a4a" stroke-width="0.9" stroke-linejoin="round"/>
<rect x="1.5" y="9.5" width="19" height="19" fill="url(#gb)" stroke="#1d5f86" stroke-width="0.9" stroke-linejoin="round"/>
<path d="M10 1.5 V9.5 M1.5 28.5 L10 20.5 H28.5 M10 20.5 V9.5" fill="none" stroke="#777" stroke-width="0.7"/>
<path d="M15 2.5 V7" stroke="#222" stroke-width="1.3"/><polygon points="12.5,5.5 15,9 17.5,5.5" fill="#222"/>
<path d="M27.5 14.5 H23.5" stroke="#222" stroke-width="1.3"/><polygon points="25,12 21.5,14.5 25,17" fill="#222"/></svg>
<div class="dd ddg" style="left:1122px;top:227px"></div>
<svg style="left:1140px;top:216px" width="27" height="29" viewBox="0 0 27 29">
<polygon points="1,5.5 16,1 26,4.5 10.5,9.5" fill="#f8f8f8" stroke="#4a4a4a" stroke-width="0.9" stroke-linejoin="round"/><polygon points="1,5.5 10.5,9.5 10.5,28 1,22.5" fill="url(#gbv)" stroke="#1d5f86" stroke-width="0.9" stroke-linejoin="round"/>
<polygon points="10.5,9.5 26,4.5 26,22.5 10.5,28" fill="#fafafa" stroke="#4a4a4a" stroke-width="0.9" stroke-linejoin="round"/><polygon points="10.5,9.5 16,7.7 16,26 10.5,28" fill="#7cc6e6" stroke="#1d5f86" stroke-width="0.9" stroke-linejoin="round"/></svg>
<div class="dd ddg" style="left:1174px;top:227px"></div>
<svg style="left:1189px;top:218px" width="31" height="25" viewBox="0 0 31 25">
<path d="M1 12.5 C7 3.5 24 3.5 30 12.5 C24 21.5 7 21.5 1 12.5 Z" fill="#dcdde2" stroke="#777" stroke-width="1.1"/>
<circle cx="15.5" cy="12" r="6.8" fill="#3a3a3e"/><circle cx="13.8" cy="10" r="2" fill="#9a9aa0"/>
<path d="M16.5 1 V24" stroke="#444" stroke-width="1.6"/></svg>
<div class="dd ddg" style="left:1226px;top:227px"></div>
<svg style="left:1241px;top:214px" width="27" height="27" viewBox="0 0 28 28">
<defs><radialGradient id="bsa" cx="0.35" cy="0.28" r="0.75"><stop offset="0" stop-color="#fff" stop-opacity="0.85"/><stop offset="0.35" stop-color="#fff" stop-opacity="0.15"/><stop offset="1" stop-color="#000" stop-opacity="0.28"/></radialGradient><clipPath id="bca"><circle cx="14" cy="14" r="13"/></clipPath></defs>
<g clip-path="url(#bca)"><rect x="0" y="0" width="15" height="15" fill="#2f6fd6"/><rect x="15" y="0" width="14" height="16" fill="#d8261c"/><path d="M0 15 H15 L13 28 H0 Z" fill="#2fae3a"/><path d="M15 15 L28 15 V28 H13 Z" fill="#f2c21a"/><circle cx="14" cy="14" r="13" fill="url(#bsa)"/></g><circle cx="14" cy="14" r="13" fill="none" stroke="#555" stroke-width="0.6"/></svg>
<svg style="left:1253px;top:227px" width="20" height="20" viewBox="0 0 20 20"><path d="M2 18 L4 12.5 L14.5 2 Q17.5 1.5 18 5 L7.5 15.5 Z" fill="#f0a630" stroke="#8a5a10" stroke-width="0.8"/><path d="M2 18 L4 12.5 L7.5 15.5 Z" fill="#f2ddb8" stroke="#8a5a10" stroke-width="0.6"/><path d="M13 3.5 L16.5 7" stroke="#d8261c" stroke-width="2.4"/></svg>
<svg style="left:1280px;top:228px" width="30" height="17" viewBox="0 0 30 17"><rect x="0.5" y="0.5" width="29" height="16" fill="#f4f4f4" stroke="#3c3c3c" stroke-width="1"/><path d="M0 0 h6 v5.5 h-6 Z M12 0 h6 v5.5 h-6 Z M24 0 h6 v5.5 h-6 Z M6 5.5 h6 v5.5 h-6 Z M18 5.5 h6 v5.5 h-6 Z M0 11 h6 v6 h-6 Z M12 11 h6 v6 h-6 Z M24 11 h6 v6 h-6 Z" fill="#3c3c3c"/></svg>
<svg style="left:1283px;top:215px" width="23" height="23" viewBox="0 0 28 28">
<defs><radialGradient id="bsb" cx="0.35" cy="0.28" r="0.75"><stop offset="0" stop-color="#fff" stop-opacity="0.85"/><stop offset="0.35" stop-color="#fff" stop-opacity="0.15"/><stop offset="1" stop-color="#000" stop-opacity="0.28"/></radialGradient><clipPath id="bcb"><circle cx="14" cy="14" r="13"/></clipPath></defs>
<g clip-path="url(#bcb)"><rect x="0" y="0" width="15" height="15" fill="#2f6fd6"/><rect x="15" y="0" width="14" height="16" fill="#d8261c"/><path d="M0 15 H15 L13 28 H0 Z" fill="#2fae3a"/><path d="M15 15 L28 15 V28 H13 Z" fill="#f2c21a"/><circle cx="14" cy="14" r="13" fill="url(#bsb)"/></g><circle cx="14" cy="14" r="13" fill="none" stroke="#555" stroke-width="0.6"/></svg>
<div class="dd ddg" style="left:1316px;top:227px"></div>
<svg style="left:1334px;top:218px" width="26" height="23" viewBox="0 0 29 26"><defs><linearGradient id="gmon" x1="0" y1="0" x2="1" y2="1"><stop offset="0" stop-color="#dcdcdc"/><stop offset="1" stop-color="#a9a9a9"/></linearGradient></defs>
<rect x="1" y="1" width="27" height="18" rx="1" fill="url(#gmon)" stroke="#444" stroke-width="1.5"/><path d="M14.5 19.5 V23 M8 24 H21" stroke="#444" stroke-width="2"/></svg>
<div class="dd ddg" style="left:1368px;top:227px"></div>
<svg style="left:1733px;top:219px" width="19" height="22" viewBox="0 0 19 22"><rect x="0.7" y="0.7" width="17.6" height="20.6" fill="none" stroke="#8f939c" stroke-width="1.2"/><polygon points="2,11 5.5,7.5 5.5,14.5" fill="#8f939c"/></svg>
<svg style="left:1772px;top:219px" width="19" height="22" viewBox="0 0 19 22"><rect x="0.7" y="0.7" width="17.6" height="20.6" fill="none" stroke="#8f939c" stroke-width="1.2"/><polygon points="17,11 13.5,7.5 13.5,14.5" fill="#8f939c"/></svg>
<div class="a" style="left:1811px;top:236px;width:17px;height:3px;background:#8f939c"></div>
<svg style="left:1847px;top:221px" width="21" height="18" viewBox="0 0 21 18"><path d="M5 5 V1 H20 V11.5 H15.5" fill="none" stroke="#8f939c" stroke-width="1.3"/><rect x="1" y="5" width="14.5" height="11.5" fill="none" stroke="#8f939c" stroke-width="1.3"/></svg>
<svg style="left:1886px;top:221px" width="18" height="18" viewBox="0 0 18 18"><path d="M1 1 L17 17 M17 1 L1 17" stroke="#8f939c" stroke-width="1.3"/></svg>
<!-- ===== Task pane tabs ===== -->
<div class="a" style="left:1880px;top:276px;width:39px;height:253px;background:#d8d8d8;border:1px solid #9f9f9f;border-right:none"></div>
<div class="a" style="left:1881px;top:312px;width:38px;height:1px;background:#a9a9a9"></div>
<div class="a" style="left:1881px;top:348px;width:38px;height:1px;background:#a9a9a9"></div>
<div class="a" style="left:1881px;top:384px;width:38px;height:1px;background:#a9a9a9"></div>
<div class="a" style="left:1881px;top:420px;width:38px;height:1px;background:#a9a9a9"></div>
<div class="a" style="left:1881px;top:456px;width:38px;height:1px;background:#a9a9a9"></div>
<div class="a" style="left:1881px;top:492px;width:38px;height:1px;background:#a9a9a9"></div>
<div class="a" style="left:1881px;top:349px;width:38px;height:35px;background:#f9f9f9"></div>
<svg style="left:1885px;top:279px" width="30" height="30" viewBox="0 0 30 30">
<polygon points="5,13 15,4 25,13 25,28.5 5,28.5" fill="#fbfbfb" stroke="#333" stroke-width="1.1"/><path d="M1.5 15 L15 2 L28.5 15" fill="none" stroke="#2f7fae" stroke-width="2.6" stroke-linejoin="miter"/>
<rect x="12" y="18" width="6.5" height="10.5" fill="#fbfbfb" stroke="#333" stroke-width="1"/><rect x="16" y="22.5" width="1.5" height="2" fill="#333"/></svg>
<svg style="left:1887px;top:314px" width="25" height="30" viewBox="0 0 25 30">
<path d="M1 7 L6 3 L6 24 L1 22 Z" fill="#d0d0d0" stroke="#4a4a4a" stroke-width="0.9" stroke-linejoin="round"/>
<path d="M6 3 L9 1.5 L11.5 4 L14 1.5 L16.5 4 L19 1.5 L21.5 4 L24 3 V24.5 L11 29 L1 22 L6 24 Z" fill="url(#gw)" stroke="#4a4a4a" stroke-width="0.9" stroke-linejoin="round"/>
<path d="M11 8 V29 M6 5 L11 8 L24 3.5 M15.5 6.5 V27.5 M20 5 V26" fill="none" stroke="#555" stroke-width="0.8"/></svg>
<svg style="left:1883px;top:353px" width="33" height="27" viewBox="0 0 33 27">
<path d="M1.5 25.5 V3 Q1.5 1.5 3 1.5 H10 L12.5 4.5 H24.5 V10" fill="#cfcfcf" stroke="#555" stroke-width="1.1"/>
<path d="M1.5 25.5 L8 10 H32 L25 25.5 Z" fill="url(#gw)" stroke="#555" stroke-width="1.1" stroke-linejoin="round"/></svg>
<svg style="left:1886px;top:389px" width="29" height="27" viewBox="0 0 29 27">
<rect x="0.7" y="0.7" width="27.6" height="25.6" fill="#f2f2f2" stroke="#444" stroke-width="1.2"/>
<rect x="3.5" y="4" width="10.5" height="6" fill="#f5c61f" stroke="#9a7500" stroke-width="0.8"/><rect x="17.5" y="4" width="7.5" height="6" fill="#f5c61f" stroke="#9a7500" stroke-width="0.8"/>
<path d="M7 13.5 H11.5 V18 H15 V22.5 H3.5 V18 H7 Z" fill="#f5c61f" stroke="#9a7500" stroke-width="0.8"/>
<rect x="18" y="15.5" width="9.5" height="9.5" fill="#e9e9e9" stroke="#666" stroke-width="0.9"/><rect x="18" y="15.5" width="9.5" height="3" fill="#8a8a8a"/></svg>
<svg style="left:1886px;top:424px" width="28" height="28" viewBox="0 0 28 28">
<defs><radialGradient id="bsc" cx="0.35" cy="0.28" r="0.75"><stop offset="0" stop-color="#fff" stop-opacity="0.85"/><stop offset="0.35" stop-color="#fff" stop-opacity="0.15"/><stop offset="1" stop-color="#000" stop-opacity="0.28"/></radialGradient><clipPath id="bcc"><circle cx="14" cy="14" r="13"/></clipPath></defs>
<g clip-path="url(#bcc)"><rect x="0" y="0" width="15" height="15" fill="#2f6fd6"/><rect x="15" y="0" width="14" height="16" fill="#d8261c"/><path d="M0 15 H15 L13 28 H0 Z" fill="#2fae3a"/><path d="M15 15 L28 15 V28 H13 Z" fill="#f2c21a"/><circle cx="14" cy="14" r="13" fill="url(#bsc)"/></g><circle cx="14" cy="14" r="13" fill="none" stroke="#555" stroke-width="0.6"/></svg>
<svg style="left:1886px;top:461px" width="29" height="27" viewBox="0 0 29 27">
<rect x="1" y="1" width="27" height="25" fill="#fafafa" stroke="#333" stroke-width="1.1"/><rect x="1.5" y="1.5" width="26" height="4" fill="#2f7fae"/>
<rect x="4.5" y="8" width="6" height="3.6" rx="0.8" fill="#4a9fcf" stroke="#1d5f86" stroke-width="0.9" stroke-linejoin="round"/><rect x="4.5" y="13.8" width="6" height="3.6" rx="0.8" fill="#4a9fcf" stroke="#1d5f86" stroke-width="0.9" stroke-linejoin="round"/><rect x="4.5" y="19.6" width="6" height="3.6" rx="0.8" fill="#4a9fcf" stroke="#1d5f86" stroke-width="0.9" stroke-linejoin="round"/>
<path d="M13.5 9.8 H25 M13.5 15.6 H25 M13.5 21.4 H25" stroke="#333" stroke-width="1"/></svg>
<svg style="left:1890px;top:502px" width="20" height="17" viewBox="0 0 20 17">
<path d="M1 1 H12.5 V8.5 H6 L3 11.5 V8.5 H1 Z" fill="#3d93c2" stroke="#1d5f86" stroke-width="0.9" stroke-linejoin="round"/><path d="M8 6 H18.5 V13 H17 V16 L14 13 H8 Z" fill="#f4f4f4" stroke="#4a4a4a" stroke-width="0.9" stroke-linejoin="round"/></svg>

<!-- ===== Coordinate triad ===== -->
<svg style="left:400px;top:885px" width="70" height="90" viewBox="400 885 70 90">
  <defs>
    <linearGradient id="tg" x1="0" y1="0" x2="1" y2="0"><stop offset="0" stop-color="#1d7a24"/><stop offset="0.45" stop-color="#3fa84a"/><stop offset="1" stop-color="#0b5a14"/></linearGradient>
    <linearGradient id="tr" x1="0" y1="0" x2="0" y2="1"><stop offset="0" stop-color="#d62222"/><stop offset="1" stop-color="#8a0c0c"/></linearGradient>
    <radialGradient id="tb" cx="0.35" cy="0.35" r="0.7"><stop offset="0" stop-color="#3a3ae0"/><stop offset="1" stop-color="#0b0b8c"/></radialGradient>
  </defs>
  <rect x="413.6" y="917" width="5.6" height="31" fill="url(#tg)"/>
  <polygon points="416.4,904.5 423.6,919.5 409.2,919.5" fill="url(#tg)"/>
  <polygon points="416,944 443,938 444,943.5 417.5,950.5" fill="url(#tr)"/>
  <polygon points="440.5,933.5 454.5,939.5 442.5,949.5" fill="url(#tr)"/>
  <polygon points="414,945.5 419,944.5 437,953.5 434,958.5 414.5,950" fill="#1212a8"/>
  <circle cx="434.5" cy="957" r="6" fill="url(#tb)"/>
  <text x="417" y="903.8" font-family="Liberation Serif, serif" font-size="19.5" fill="#0f8a14" text-anchor="middle">Y</text>
  <text x="458" y="945.1" font-family="Liberation Serif, serif" font-size="19.5" fill="#e81c1c" text-anchor="middle">X</text>
  <text x="444" y="967.9" font-family="Liberation Serif, serif" font-size="19.5" fill="#1a1af0" text-anchor="middle">Z</text>
</svg>
<!-- ===== Bottom tabs ===== -->
<div class="a" style="left:0;top:1027px;width:1920px;height:24px;background:#f7f7f7"></div>
<div class="a" style="left:67px;top:1027px;width:2px;height:24px;background:#9fb8b8"></div>
<div class="a" style="left:94px;top:1026px;width:97px;height:25px;background:#a2a4bc;border-top:1px solid #4a4a55"></div>
<div class="a" style="left:118px;top:1027px;width:1px;height:24px;background:#b9bbcd"></div>
<div class="a" style="left:142px;top:1027px;width:1px;height:24px;background:#b9bbcd"></div>
<div class="a" style="left:166px;top:1027px;width:1px;height:24px;background:#b9bbcd"></div>
<svg style="left:94px;top:1027px" width="97" height="24" viewBox="0 0 97 24">
  <g fill="#8b8da6"><path d="M7.5 6 h2 v12 h-2 Z M17.5 6 V18 L10 12 Z"/><path d="M41 6 V18 L33 12 Z"/><path d="M57 6 V18 L65 12 Z"/><path d="M80 6 V18 L87.5 12 Z M87.5 6 h2 v12 h-2 Z"/></g>
</svg>
<div class="t" style="left:209px;top:1028px;font-size:19px;line-height:22px;letter-spacing:1px">模型</div>
<div class="a" style="left:261px;top:1027px;width:91px;height:24px;background:#d5d5d5;border:1px solid #a3a3a3;border-bottom:none"></div>
<div class="a" style="left:351px;top:1027px;width:128px;height:24px;background:#d5d5d5;border:1px solid #a3a3a3;border-bottom:none"></div>
<div class="t" style="left:272px;top:1028px;font-size:19px;line-height:22px;letter-spacing:0.1px">3D 視圖</div>
<div class="t" style="left:363px;top:1028px;font-size:19px;line-height:22px;letter-spacing:0.45px">動作研究 1</div>
<!-- ===== Status bar ===== -->
<div class="a" style="left:0;top:1051px;width:1920px;height:1px;background:#8c8c8c"></div>
<div class="a" style="left:0;top:1052px;width:1920px;height:28px;background:#f7f7f7"></div>
<div class="a" style="left:0;top:1078px;width:1920px;height:2px;background:#ebebeb"></div>
<div class="t" style="left:1px;top:1055px;font-size:18.4px;line-height:22px;color:#111">SOLIDWORKS Premium 2016 x64 Edition</div>
<div class="vsep" style="left:1685px;top:1054px;height:23px;background:#cfcfcf"></div>
<div class="vsep" style="left:1693px;top:1054px;height:23px;background:#cfcfcf"></div>
<div class="vsep" style="left:1701px;top:1054px;height:23px;background:#cfcfcf"></div>
<div class="vsep" style="left:1717px;top:1054px;height:23px;background:#cfcfcf"></div>
<div class="t" style="left:1742px;top:1055px;font-size:18.4px;line-height:22px;color:#111;letter-spacing:0.1px">MMGS</div>
<div class="a" style="left:1811px;top:1063px;width:0;height:0;border-left:3.5px solid transparent;border-right:3.5px solid transparent;border-bottom:4.5px solid #333"></div>
<svg style="left:1884px;top:1052px" width="34" height="27" viewBox="0 0 34 27">
  <path d="M3 3.5 L8.5 1 L30 12.5 V17 L20 25.5 L3 15.5 Z" fill="url(#gw)" stroke="#555" stroke-width="1"/>
  <path d="M3 15.5 L20 22 L30 13" fill="none" stroke="#777" stroke-width="0.9"/>
  <circle cx="8.5" cy="6" r="2" fill="none" stroke="#444" stroke-width="1"/>
  <path d="M13 11.5 L19 5.5 M16.5 13.5 L22.5 7.5 M20 15.5 L26 9.5 M23.5 17.5 L28.5 12.5" stroke="#333" stroke-width="1.3"/>
</svg>
<div class="a" style="left:1880px;top:1079px;width:33px;height:1px;background:#3d93c2"></div>
<div class="a" style="left:1917px;top:1027px;width:1px;height:24px;background:#b5d0d6"></div>

</body></html>
